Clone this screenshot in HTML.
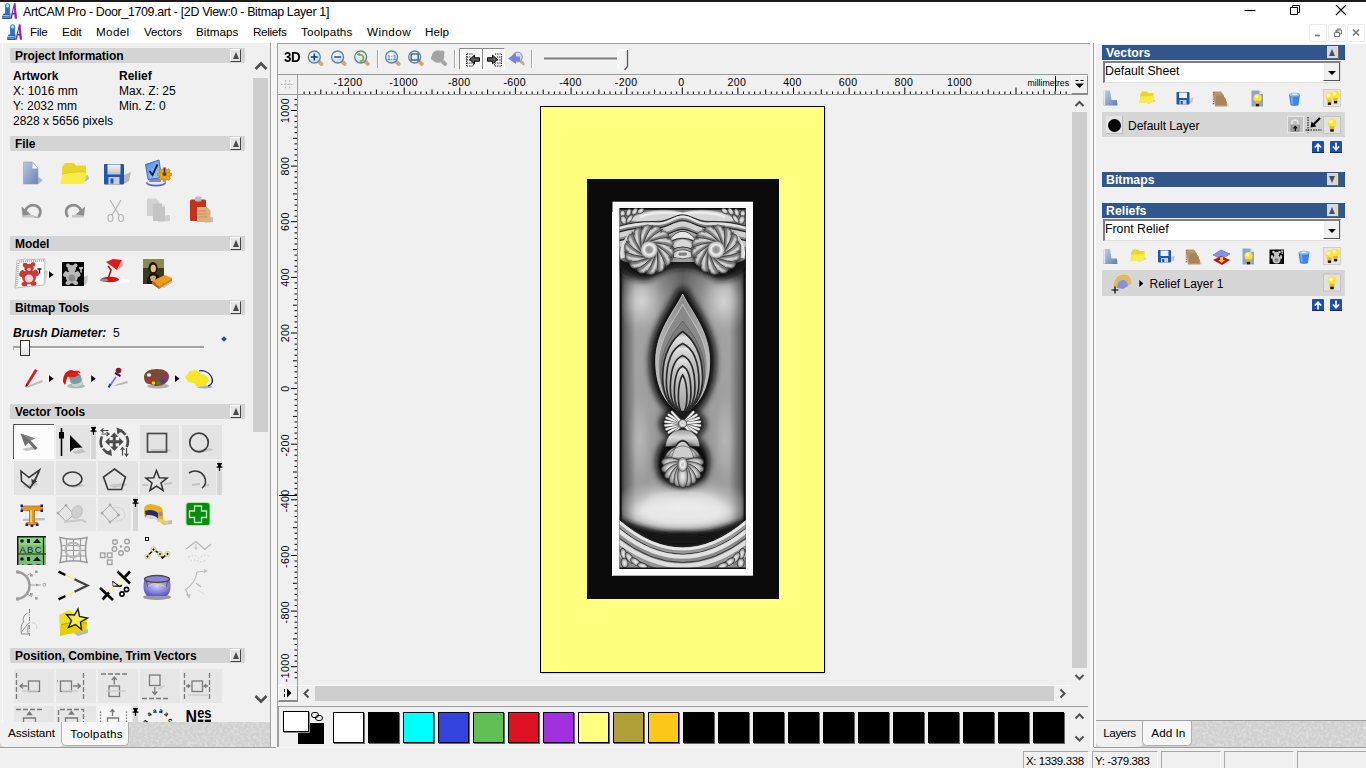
<!DOCTYPE html>
<html>
<head>
<meta charset="utf-8">
<title>ArtCAM Pro - Door_1709.art</title>
<style>
*{box-sizing:border-box;margin:0;padding:0}
html,body{width:1366px;height:768px;overflow:hidden;background:#f0f0f0;font-family:"Liberation Sans",sans-serif;color:#000}
.abs{position:absolute}
#app{position:relative;width:1366px;height:768px;overflow:hidden;background:#f0f0f0}
#topline{left:0;top:0;width:1366px;height:2px;background:#1c1c1c}
#titlebar{left:0;top:2px;width:1366px;height:21px;background:#fff}
#menubar{left:0;top:23px;width:1366px;height:20px;background:#fff}
.ttl{font-size:12.4px;left:23px;top:5px;white-space:nowrap;letter-spacing:-0.33px}
.mi{font-size:11.7px;top:25.3px;white-space:nowrap}
/* left panel */
#left{left:0;top:43px;width:271px;height:705px;background:#f0f0f0;border-right:1px solid #fff}
.hdr{left:10px;width:235px;height:15px;background:#d4d4d4;font-weight:bold;font-size:12px;line-height:17px;padding-left:5px;white-space:nowrap;overflow:hidden;letter-spacing:-0.080px}
.hbtn{position:absolute;right:4px;top:1px;width:11px;height:13px;background:#e4e4e4;border-right:1px solid #444;border-bottom:1px solid #444;border-left:1px solid #fff;border-top:1px solid #fff}
.hbtn:after{content:"";position:absolute;left:1.5px;top:2px;border-left:3.2px solid transparent;border-right:3.2px solid transparent;border-bottom:7px solid #4a4a4a}
.t12{font-size:12px;white-space:nowrap;line-height:14px}
/* right panel */
.rhdr{left:1102px;width:243px;height:15px;background:#31568c;color:#fff;font-weight:bold;font-size:12.300px;line-height:16px;padding-left:4px;overflow:hidden}
.rbtn{position:absolute;right:6px;top:1px;width:12px;height:13px;background:#d4d8e0;border-right:1px solid #666;border-bottom:1px solid #666}
.rbtn.up:after{content:"";position:absolute;left:2px;top:2.5px;border-left:3.5px solid transparent;border-right:3.5px solid transparent;border-bottom:7px solid #505050}
.rbtn.dn:after{content:"";position:absolute;left:2px;top:3px;border-left:3.5px solid transparent;border-right:3.5px solid transparent;border-top:7px solid #505050}
.combo{left:1103px;width:238px;height:21px;background:#fff;border-top:2px solid #808080;border-left:2px solid #808080;border-right:1px solid #e0e0e0;border-bottom:1px solid #e0e0e0;font-size:12.300px;line-height:14px;padding-left:0px;padding-top:1px;white-space:nowrap}
.combo .dd{position:absolute;right:0;top:0;width:17px;height:18px;background:#f0f0f0;border-right:1px solid #555;border-bottom:1px solid #555;border-left:1px solid #fff}
.combo .dd:after{content:"";position:absolute;left:4px;top:8px;border-left:4px solid transparent;border-right:4px solid transparent;border-top:4px solid #000}
.lrow{left:1102px;width:243px;height:25px;background:#d6d6d6;font-size:12.5px}
.sw{position:absolute;top:712px;width:31px;height:31px;border:1px solid #000;box-shadow:1px 1px 0 #666}
</style>
</head>
<body>
<div id="app">
<div id="topline" class="abs"></div>
<div id="titlebar" class="abs"></div>
<div id="menubar" class="abs"></div>
<!-- title -->
<svg class="abs" style="left:2px;top:3px" width="17" height="17" viewBox="0 0 17 17"><path d="M3 11.500V3.200a2.600 2.900 0 0 1 5.200 0v8.300z" fill="#3c82d2"/><ellipse cx="5.500" cy="2.800" rx="1.600" ry="1.700" fill="#a6e0ea"/><rect x="4.600" y="5.500" width="2" height="5" fill="#2558b0" opacity="0.700"/><path d="M1.500 10.500h7v5.300H0.300v-2.500z" fill="#2c64bc"/><path d="M1 12.500h6.500M1.500 14.200h6" stroke="#a8d8f4" stroke-width="0.800"/><path d="M0.300 15.300h8.200" stroke="#1c3c80" stroke-width="0.900"/><path d="M8.300 15.700L12 .3h1.400L15 15.700h-2.100l-.5-4.300h-1.700l-1 4.300z" fill="#86209e"/><path d="M10.900 9.700l1-5 .4 5z" fill="#fff"/><path d="M12.700 .3h.7L15 15.700h-1z" fill="#b040b8" opacity="0.600"/></svg>
<div class="abs ttl" id="ttl">ArtCAM Pro - Door_1709.art - [2D View:0 - Bitmap Layer 1]</div>
<svg class="abs" style="left:1241px;top:3px" width="120" height="16" viewBox="0 0 120 16"><path d="M3.5 7.5h11" stroke="#000" stroke-width="1.2" fill="none"/><path d="M49.5 4.5h7v7h-7z M51.5 4.5v-2h7v7h-2" stroke="#000" stroke-width="1" fill="none"/><path d="M95 2l10 10M105 2l-10 10" stroke="#000" stroke-width="1.1" fill="none"/></svg>
<!-- menu -->
<svg class="abs" style="left:7px;top:24px" width="17" height="17" viewBox="0 0 17 17"><path d="M3 11.500V3.200a2.600 2.900 0 0 1 5.200 0v8.300z" fill="#3c82d2"/><ellipse cx="5.500" cy="2.800" rx="1.600" ry="1.700" fill="#a6e0ea"/><rect x="4.600" y="5.500" width="2" height="5" fill="#2558b0" opacity="0.700"/><path d="M1.500 10.500h7v5.300H0.300v-2.500z" fill="#2c64bc"/><path d="M1 12.500h6.500M1.500 14.200h6" stroke="#a8d8f4" stroke-width="0.800"/><path d="M0.300 15.300h8.200" stroke="#1c3c80" stroke-width="0.900"/><path d="M8.300 15.700L12 .3h1.400L15 15.700h-2.100l-.5-4.300h-1.700l-1 4.300z" fill="#86209e"/><path d="M10.900 9.700l1-5 .4 5z" fill="#fff"/><path d="M12.700 .3h.7L15 15.700h-1z" fill="#b040b8" opacity="0.600"/></svg>
<div class="abs mi" style="left:30px;letter-spacing:-0.34px">File</div>
<div class="abs mi" style="left:62px;letter-spacing:-0.17px">Edit</div>
<div class="abs mi" style="left:96px;letter-spacing:0.33px">Model</div>
<div class="abs mi" style="left:144px;letter-spacing:-0.15px">Vectors</div>
<div class="abs mi" style="left:196px;letter-spacing:0.03px">Bitmaps</div>
<div class="abs mi" style="left:253px;letter-spacing:-0.32px">Reliefs</div>
<div class="abs mi" style="left:301px;letter-spacing:0.16px">Toolpaths</div>
<div class="abs mi" style="left:367px;letter-spacing:0.4px">Window</div>
<div class="abs mi" style="left:425px;letter-spacing:-0.02px">Help</div>
<svg class="abs" style="left:1308px;top:26px;overflow:visible" width="58" height="14" viewBox="0 0 58 14"><rect x="1.500" y="-1.500" width="17" height="17" rx="1.500" fill="none" stroke="#ececec"/><rect x="20.500" y="-1.500" width="17" height="17" rx="1.500" fill="none" stroke="#ececec"/><rect x="39.500" y="-1.500" width="17" height="17" rx="1.500" fill="none" stroke="#ececec"/><path d="M7 9.5h5" stroke="#777" stroke-width="1.6"/><path d="M26.5 6.5h5v4h-5z M28.5 6.5v-2.500h5v4h-2" stroke="#777" stroke-width="1" fill="none"/><path d="M27 5h4M29 3h4" stroke="#777" stroke-width="1"/><path d="M45 3.500l6 6M51 3.500l-6 6" stroke="#777" stroke-width="1.6"/></svg>
<!--TITLE-END-->
<!-- left panel -->
<div id="left" class="abs"></div>
<div class="abs" style="left:2px;top:43px;width:1px;height:680px;background:#fafafa"></div>
<div class="abs hdr" style="top:48px">Project Information<span class="hbtn"></span></div>
<div class="abs t12" style="left:13px;top:69px;font-weight:bold" id="aw">Artwork</div>
<div class="abs t12" style="left:119px;top:69px;font-weight:bold" id="rl">Relief</div>
<div class="abs t12" style="left:13px;top:84px" id="l1">X: 1016 mm</div>
<div class="abs t12" style="left:119px;top:84px" id="l2">Max. Z: 25</div>
<div class="abs t12" style="left:13px;top:99px" id="l3">Y: 2032 mm</div>
<div class="abs t12" style="left:119px;top:99px" id="l4">Min. Z: 0</div>
<div class="abs t12" style="left:13px;top:114px" id="l5">2828 x 5656 pixels</div>
<div class="abs hdr" style="top:136px">File<span class="hbtn"></span></div>
<div class="abs hdr" style="top:236px">Model<span class="hbtn"></span></div>
<div class="abs hdr" style="top:300px">Bitmap Tools<span class="hbtn"></span></div>
<div class="abs t12" style="left:13px;top:326px;font-weight:bold;font-style:italic" id="bd">Brush Diameter:</div>
<div class="abs t12" style="left:113px;top:326px">5</div>
<div class="abs" style="left:13px;top:346px;width:191px;height:2px;background:#a4a4a4"></div>
<div class="abs" style="left:14px;top:348px;width:190px;height:1px;background:#fdfdfd"></div>
<div class="abs" style="left:13px;top:346px;width:1px;height:4px;background:#a8a8a8"></div>
<div class="abs" style="left:20px;top:340px;width:10px;height:16px;background:linear-gradient(#fff,#e2e2e2);border:1px solid #333"></div>
<div class="abs" style="left:222px;top:337px;width:4px;height:4px;background:#33486f;transform:rotate(45deg)"></div>
<div class="abs hdr" style="top:404px">Vector Tools<span class="hbtn"></span></div>
<div class="abs" style="left:13px;top:424px;width:41px;height:35px;background:#fcfcfc;border-left:1px solid #555;border-top:1px solid #555"></div>
<div class="abs" style="left:56px;top:425px;width:34px;height:34px;background:#e3e3e3"></div>
<div class="abs" style="left:91px;top:425px;width:5px;height:34px;background:#d6d6d6"></div>
<div class="abs" style="left:140px;top:425px;width:39px;height:34px;background:#e3e3e3"></div>
<div class="abs" style="left:182px;top:425px;width:40px;height:34px;background:#e3e3e3"></div>
<div class="abs" style="left:14px;top:461px;width:40px;height:34px;background:#e3e3e3"></div>
<div class="abs" style="left:56px;top:461px;width:40px;height:34px;background:#e3e3e3"></div>
<div class="abs" style="left:98px;top:461px;width:40px;height:34px;background:#e3e3e3"></div>
<div class="abs" style="left:140px;top:461px;width:39px;height:34px;background:#e3e3e3"></div>
<div class="abs" style="left:182px;top:461px;width:34px;height:34px;background:#e3e3e3"></div>
<div class="abs" style="left:217px;top:461px;width:5px;height:34px;background:#d6d6d6"></div>
<div class="abs" style="left:56px;top:497px;width:40px;height:34px;background:#e6e6e6"></div>
<div class="abs" style="left:98px;top:497px;width:33px;height:34px;background:#e6e6e6"></div>
<div class="abs" style="left:133px;top:497px;width:5px;height:34px;background:#d6d6d6"></div>
<div class="abs hdr" style="top:648px">Position, Combine, Trim Vectors<span class="hbtn"></span></div>
<div class="abs" style="left:14px;top:669px;width:40px;height:34px;background:#e6e6e6"></div>
<div class="abs" style="left:56px;top:669px;width:40px;height:34px;background:#e6e6e6"></div>
<div class="abs" style="left:98px;top:669px;width:40px;height:34px;background:#e6e6e6"></div>
<div class="abs" style="left:140px;top:669px;width:40px;height:34px;background:#e6e6e6"></div>
<div class="abs" style="left:182px;top:669px;width:40px;height:34px;background:#e6e6e6"></div>
<div class="abs" style="left:14px;top:706px;width:40px;height:16px;background:#e6e6e6"></div>
<div class="abs" style="left:56px;top:706px;width:40px;height:16px;background:#e6e6e6"></div>
<div class="abs" style="left:98px;top:706px;width:33px;height:16px;background:#f6f6f6"></div>
<div class="abs" style="left:133px;top:706px;width:5px;height:16px;background:#d6d6d6"></div>
<div class="abs" style="left:253px;top:78px;width:15px;height:354px;background:#cdcdcd"></div>
<svg class="abs" style="left:252px;top:56px" width="18" height="18" viewBox="0 0 18 18"><path d="M3.500 13l5.500-5.500 5.500 5.500" stroke="#505050" stroke-width="2.700" fill="none"/></svg>
<svg class="abs" style="left:252px;top:690px" width="18" height="18" viewBox="0 0 18 18"><path d="M3.500 6l5.500 5.500 5.500-5.500" stroke="#505050" stroke-width="2.700" fill="none"/></svg>
<svg class="abs" style="left:0;top:0" width="271" height="722" viewBox="0 0 271 722">
<defs>
<linearGradient id="gdoc" x1="0" y1="0" x2="1" y2="1"><stop offset="0" stop-color="#b9c9e2"/><stop offset="1" stop-color="#6783ad"/></linearGradient>
<linearGradient id="gfl" x1="0" y1="0" x2="0" y2="1"><stop offset="0" stop-color="#fafafa"/><stop offset="1" stop-color="#b9bec6"/></linearGradient>
<linearGradient id="gmon" x1="0" y1="0" x2="1" y2="1"><stop offset="0" stop-color="#3f86e6"/><stop offset="1" stop-color="#b9d2f5"/></linearGradient>
<radialGradient id="gbowl" cx="0.5" cy="0.4" r="0.6"><stop offset="0" stop-color="#d5d2ff"/><stop offset="1" stop-color="#5f59c9"/></radialGradient>
<filter id="b1"><feGaussianBlur stdDeviation="0.6"/></filter>
<filter id="b2"><feGaussianBlur stdDeviation="1.1"/></filter>
</defs>
<!-- FILE row 1 -->
<g>
<path d="M37 176l6 4-5 4h-6z" fill="#b4b4b4" filter="url(#b1)"/>
<path d="M23.500 162h9l5.500 6v16h-14.500z" fill="url(#gdoc)"/>
<path d="M32.500 162v6.500h5.500z" fill="#f8fafc"/>
<path d="M23.500 162h9l5.500 6v16h-14.500z" fill="none" stroke="#8aa0c2" stroke-width="0.6"/>
</g>
<g>
<path d="M70 181l18-6 1 4-8 5z" fill="#b8b8b8" filter="url(#b1)"/>
<path d="M62 167l3-4h9l2 2.500h10v6l-1 4H62z" fill="#e8d628"/>
<path d="M60.300 184c1-4 1.500-8 3-11l23.500-1c-.5 5-2 9-3.500 12z" fill="#f8ec46"/>
<path d="M63 174c5-1 14-3 23-2" stroke="#d9c620" stroke-width="0.8" fill="none"/>
</g>
<g>
<path d="M124 175l7-3-2 9-5 3z" fill="#b8b8b8" filter="url(#b1)"/>
<rect x="104" y="164" width="20" height="20.500" rx="1" fill="#1b57b3"/>
<rect x="107.500" y="164.500" width="13" height="10" fill="url(#gfl)"/>
<rect x="108.500" y="177" width="11" height="7.500" fill="#c9ccd2"/>
<rect x="110.500" y="178.500" width="3" height="5" fill="#1b57b3"/>
</g>
<g>
<ellipse cx="156" cy="183" rx="10" ry="3.500" fill="#5a66b8"/>
<ellipse cx="156" cy="182" rx="9" ry="2.800" fill="#e6e9f7"/>
<path d="M150 176h10l1 6h-12z" fill="#8088c9"/>
<path d="M145.500 164.500l13.500-4.500 2.500 17.500-13.500 2z" fill="url(#gmon)" stroke="#2c5cb0" stroke-width="0.800"/>
<path d="M149.500 171l3 4 5-10.500" stroke="#16213f" stroke-width="1.800" fill="none"/>
<g fill="#e8a416" stroke="#a86c08" stroke-width="0.500"><circle cx="164.500" cy="174.500" r="5.200"/><rect x="163" y="167.500" width="3" height="14" rx="0.500"/><rect x="157.500" y="173" width="14" height="3" rx="0.500"/><rect x="163" y="167.500" width="3" height="14" rx="0.500" transform="rotate(45 164.500 174.500)"/><rect x="163" y="167.500" width="3" height="14" rx="0.500" transform="rotate(-45 164.500 174.500)"/></g><circle cx="164.500" cy="174.500" r="4.600" fill="#e8a416"/>
<circle cx="164.500" cy="174" r="2" fill="#5a3a10"/><path d="M164.500 168v4" stroke="#3a3060" stroke-width="1.500"/>
</g>
<!-- FILE row 2 -->
<g>
<path d="M22 215h12v2.500H22z" fill="#c6c6c6" filter="url(#b1)"/>
<path d="M25.500 213.500c-1-6 5-9.500 10-8 5 1.500 6.500 7 3 11.500" stroke="#8d8d8d" stroke-width="2.600" fill="none"/>
<path d="M21.500 206.500l1 9 8.500-1z" fill="#8d8d8d"/>
<path d="M34 217l5 .5" stroke="#aaa" stroke-width="1.500"/>
</g>
<g>
<path d="M72 215h12v2.500H72z" fill="#c6c6c6" filter="url(#b1)"/>
<path d="M81 213.500c1-6-5-9.500-10-8-5 1.500-6.500 7-3 11.500" stroke="#8d8d8d" stroke-width="2.600" fill="none"/>
<path d="M85 206.500l-1 9-8.500-1z" fill="#8d8d8d"/>
</g>
<g stroke="#b4b4b4" stroke-width="1.200" fill="none">
<path d="M110 200l9 15M121 200l-9 15"/>
<ellipse cx="110.500" cy="218" rx="2.500" ry="3.500"/><ellipse cx="121" cy="218" rx="2.500" ry="3.500"/>
</g>
<g>
<path d="M155 216l15-1v6l-12 1z" fill="#d0d0d0" filter="url(#b1)"/>
<path d="M147 198.500h9l3 3v14.500h-12z" fill="#d2d2d2"/>
<path d="M153 203.500h9l3 3v14.500h-12z" fill="#c4c4c4"/>
<path d="M162 203.500v3h3z" fill="#e6e6e6"/>
</g>
<g>
<path d="M205 218l8-1v5l-8 1z" fill="#c0c0c0" filter="url(#b1)"/>
<rect x="190" y="199.500" width="16" height="21.500" rx="1.500" fill="#c2321e"/>
<rect x="195" y="196.500" width="6.500" height="5" rx="1.500" fill="#b9bcc6"/>
<path d="M197 207h10l3.500 3.500V222H197z" fill="#dcb27c"/>
<path d="M199 211h7M199 214h8M199 217h8" stroke="#b98c58" stroke-width="0.800"/>
</g>
<!-- MODEL row -->
<g>
<path d="M17 260l28-1-1 26-29 3z" fill="#fdfdfd" stroke="#b0b0b0" stroke-width="0.800"/>
<path d="M18.500 263l-2 24M19 261.500l25-1" stroke="#9a9a9a" stroke-width="2.200" stroke-dasharray="0.800 1.200"/>
<path d="M45 270l3 1-3 14z" fill="#d0d0d0"/>
<g fill="#c63a3a"><circle cx="25" cy="265" r="2.300"/><circle cx="33" cy="264.500" r="2.300"/><ellipse cx="29" cy="268" rx="4.800" ry="4.200"/><ellipse cx="29" cy="277" rx="7" ry="7.200"/><ellipse cx="22" cy="273.500" rx="2.500" ry="3.500" transform="rotate(30 22 273.500)"/><ellipse cx="36" cy="273" rx="2.500" ry="3.500" transform="rotate(-30 36 273)"/><ellipse cx="24.500" cy="284" rx="3" ry="2.300"/><ellipse cx="33.500" cy="283.500" rx="3" ry="2.300"/></g>
<ellipse cx="29" cy="278.500" rx="4.300" ry="4" fill="#f6d8d8"/>
<ellipse cx="29" cy="269.500" rx="2" ry="1.400" fill="#f0c0c0"/>
<path d="M37.500 269h4M39.500 269v4.500" stroke="#222" stroke-width="1.300"/>
<path d="M49 271.300v6.800l4.600-3.400z" fill="#000"/>
</g>
<g>
<path d="M84 277l4-2-1 8-3 3z" fill="#c4c4c4" filter="url(#b1)"/>
<rect x="62" y="262" width="22" height="24" fill="#050505"/>
<g fill="#b9b9b9"><circle cx="68" cy="265.500" r="2"/><circle cx="75.500" cy="265.500" r="2"/><ellipse cx="71.800" cy="268.500" rx="4.200" ry="3.600"/><ellipse cx="71.800" cy="277" rx="6" ry="6.500"/><ellipse cx="65.500" cy="274" rx="2" ry="3" transform="rotate(30 65.500 274)"/><ellipse cx="78" cy="274" rx="2" ry="3" transform="rotate(-30 78 274)"/><ellipse cx="68" cy="283" rx="2.600" ry="2"/><ellipse cx="75.600" cy="283" rx="2.600" ry="2"/></g>
<ellipse cx="71.800" cy="278" rx="3.500" ry="3.500" fill="#8a8a8a"/>
<path d="M79 268h4M81 268v4.500" stroke="#eee" stroke-width="1.300"/>
</g>
<g>
<ellipse cx="118" cy="281" rx="11" ry="2.500" fill="#fff" filter="url(#b1)"/>
<ellipse cx="110" cy="279.500" rx="9" ry="2.800" fill="#d11414"/>
<ellipse cx="104" cy="280" rx="4" ry="1.500" fill="#8e8e8e" filter="url(#b1)"/>
<path d="M108 279l3-9-3-4" stroke="#c01010" stroke-width="1.600" fill="none"/>
<path d="M106 262l7-3 9 1-5 10z" fill="#e01b1b"/>
<path d="M117 270l5-10 1 6z" fill="#f6a0a0"/>
</g>
<g>
<rect x="143" y="259" width="21" height="25" fill="#3a3a22"/>
<rect x="143" y="259" width="21" height="9" fill="#8a8a52"/>
<path d="M147 284c0-8 2-10 6-11 5 1 8 4 8 11z" fill="#1a140c"/>
<ellipse cx="153" cy="268" rx="4.500" ry="6" fill="#1f140a"/>
<ellipse cx="153.300" cy="268.500" rx="2.700" ry="3.800" fill="#e6bb84"/>
<path d="M150 277c2-2 5-2 6 0l-1 4h-4z" fill="#d8a870"/>
<path d="M152 281l13-6 7 3-13 8z" fill="#f09a1c"/>
<path d="M152 281l7 5v3l-7-5z" fill="#b86608"/>
<path d="M159 286l13-8v3l-13 8z" fill="#d88410"/>
<path d="M162 287l10-6 1 1-9 6z" fill="#c0c0c0" filter="url(#b1)"/>
</g>
<!-- BITMAP row -->
<g>
<path d="M25 387l17-7 1 2-16 6z" fill="#bdbdbd" filter="url(#b1)"/>
<path d="M35 369l2.500 1.500-9.500 15-2.500 1.500.500-3z" fill="#d81c2a"/>
<path d="M25.500 387l.500-3 2 1.500z" fill="#7a1010"/>
<path d="M49 375.300v6.800l4.600-3.400z" fill="#000"/>
</g>
<g>
<ellipse cx="76" cy="386" rx="9" ry="2.500" fill="#b0b8b8" filter="url(#b1)"/>
<path d="M68 375l4 11c3 2 8 1 11-2l-3-11z" fill="#7f9a9a"/>
<path d="M72 386c3 2 8 1 11-2l-1-3c-3 3-8 4-11 2z" fill="#c8d4d4"/>
<ellipse cx="74" cy="374" rx="6.500" ry="3" transform="rotate(-15 74 374)" fill="#e02020"/>
<path d="M63 382c0-6 2-11 8-12 2 0 4 1 5 3-5 0-8 2-9 5s-1 6-2 7z" fill="#d81818"/>
<path d="M78 373c4 1 6 5 4 9" stroke="#ececec" stroke-width="1.200" fill="none"/>
<path d="M91.200 375.300v6.800l4.600-3.400z" fill="#000"/>
</g>
<g>
<path d="M112 386l15-5 1 2-8 2z" fill="#b4b4b4" filter="url(#b1)"/>
<circle cx="118.500" cy="370.500" r="2.800" fill="#8e1436"/>
<path d="M115 373l5.500 3" stroke="#3a2030" stroke-width="2.200"/>
<path d="M117 375.500l-7 10" stroke="#dfe4f4" stroke-width="3.600"/>
<path d="M116 377l-6 8.500" stroke="#7080d8" stroke-width="1.600"/>
<path d="M110.500 384l-2 3.500" stroke="#2038c0" stroke-width="2"/>
</g>
<g>
<ellipse cx="158" cy="386" rx="11" ry="2.500" fill="#b0b0b0" filter="url(#b1)"/>
<path d="M144 377c0-5 5-8 13-8s12 3 12 8-6 9-12 9c-4 0-5-2-8-2s-5-3-5-7z" fill="#7a4a34"/>
<ellipse cx="149" cy="375" rx="2.200" ry="1.700" fill="#f0f0f0"/>
<circle cx="149" cy="381" r="1.800" fill="#e02020"/><circle cx="153.500" cy="383" r="1.800" fill="#f0d010"/><circle cx="158.500" cy="383" r="1.800" fill="#20a030"/><circle cx="163" cy="381" r="1.800" fill="#2040e0"/><circle cx="165.500" cy="377" r="1.700" fill="#8030c0"/>
<path d="M175 375.300v6.800l4.600-3.400z" fill="#000"/>
</g>
<g>
<ellipse cx="205" cy="387" rx="8" ry="1.500" fill="#a8b0d8" filter="url(#b1)"/>
<path d="M199 371c3-1 9 0 12 5s1 9-3 10" stroke="#1a237e" stroke-width="1.300" fill="none"/>
<path d="M185 377l5-6 6-1 5 4 6 2 2 5-4 5-8 1-3-4-6-1z" fill="#f6e626"/>
</g>
<!-- VECTOR row1 -->
<g>
<path d="M22 449l12-3 4 3-12 2z" fill="#c4c4c4" filter="url(#b1)"/>
<path d="M20.500 433.500l14.500 5-4.500 2 7 7.500-2.500 2-6.500-7.500-3.500 3.500z" fill="#6e6e6e"/>
<path d="M20.500 433.500l14.500 5-4.500 2z" fill="#858585"/>
</g>
<g>
<path d="M72 452l10-3 4 3-10 2z" fill="#c0c0c0" filter="url(#b1)"/>
<path d="M61.500 428v28" stroke="#000" stroke-width="1.600"/>
<rect x="59" y="432" width="5" height="6.500" fill="#000"/>
<path d="M70 435v17l4.200-4 8.300-.5z" fill="#000"/>
</g>
<path d="M91 427h5v1.500h-1v2h1.500v1.200h-2.400v3.300h-1.200v-3.300h-2.400v-1.200h1.500v-2h-1z" fill="#000"/>
<g fill="#4c4c4c" stroke="none">
<path d="M102 447.500a12.500 12.500 0 0 1 0-11" fill="none" stroke="#4c4c4c" stroke-width="2.600"/>
<path d="M126.600 436a12.500 12.500 0 0 1 0 11" fill="none" stroke="#4c4c4c" stroke-width="2.600"/>
<path d="M119.500 430.300a12.500 12.500 0 0 1 6 4.500" fill="none" stroke="#4c4c4c" stroke-width="2.600"/>
<path d="M109 453.200a12.500 12.500 0 0 1-6-4.500" fill="none" stroke="#4c4c4c" stroke-width="2.600"/>
<path d="M116.500 427.500l6.500 2.500-5.500 4.500z"/><path d="M112 456l-6.500-2.500 5.500-4.500z"/>
<path d="M114.300 432.500l4.200 4.500h-2.700v3.300h3.300v-2.700l4.500 4.200-4.500 4.200v-2.700h-3.300v3.300h2.700l-4.200 4.500-4.200-4.500h2.700v-3.300h-3.300v2.700l-4.500-4.200 4.500-4.200v2.700h3.300v-3.300h-2.700z"/>
<path d="M101.500 430.500h7M103.500 428.500l-2.500 2 2.500 2M108.500 434h-7M106.500 432l2.500 2-2.500 2" stroke="#4c4c4c" stroke-width="1.200" fill="none"/>
<path d="M122.500 448v7.500M120.600 450l1.900-2.500 1.900 2.500M126.500 455.500v-7.500M124.600 453.500l1.900 2.500 1.900-2.500" stroke="#4c4c4c" stroke-width="1.200" fill="none"/>
</g>
<g>
<path d="M150 449h18l4 2-18 2z" fill="#c6c6c6" filter="url(#b1)"/>
<rect x="147.500" y="433.500" width="19" height="18.500" fill="none" stroke="#4a4a4a" stroke-width="1.700"/>
</g>
<g>
<path d="M196 450l14-2 4 2-14 3z" fill="#c6c6c6" filter="url(#b1)"/>
<circle cx="199" cy="442.500" r="9.300" fill="none" stroke="#3c3c3c" stroke-width="1.700"/>
</g>
<!-- VECTOR row2 -->
<g>
<path d="M22 486l14-4 2 3-10 3z" fill="#c4c4c4" filter="url(#b1)"/>
<path d="M21 471l8 6.500 10.500-7.500-4.500 10.500-5 7.500-8.500-7z" fill="none" stroke="#383838" stroke-width="1.600"/>
<path d="M39 472l-6.500 11.500M32 480l.500 4 3.500-2.500z" stroke="#383838" stroke-width="1.200" fill="#383838"/>
</g>
<g>
<path d="M70 486l12-2 3 2-12 2z" fill="#c6c6c6" filter="url(#b1)"/>
<ellipse cx="72.500" cy="479" rx="9.500" ry="7" fill="none" stroke="#383838" stroke-width="1.600"/>
</g>
<g>
<path d="M108 485l16-2 4 2-14 3z" fill="#c6c6c6" filter="url(#b1)"/>
<path d="M114.500 469l11 8-4 12.500h-13.500l-4.500-12.500z" fill="none" stroke="#383838" stroke-width="1.600"/>
</g>
<g>
<path d="M142 485h6M164 484l8-1" stroke="#c6c6c6" stroke-width="2" filter="url(#b1)"/>
<path d="M156.500 470.500l2.800 7.300 7.700.3-6 4.900 2.100 7.500-6.600-4.300-6.600 4.300 2.100-7.500-6-4.900 7.700-.3z" fill="none" stroke="#303030" stroke-width="1.500"/>
</g>
<g>
<path d="M192 485l8-1M203 486l6-1" stroke="#c2c2c2" stroke-width="2.200" filter="url(#b1)"/>
<path d="M189 473c5-3.500 12-2 15 3s1.500 10-2 12" fill="none" stroke="#383838" stroke-width="1.600"/>
</g>
<path d="M217 463h5v1.500h-1v2h1.500v1.200h-2.400v3.300h-1.200v-3.300h-2.400v-1.200h1.500v-2h-1z" fill="#000"/>
<!-- VECTOR row3 -->
<g>
<path d="M23 520l22-1" stroke="#c0c0c0" stroke-width="2.400" filter="url(#b1)"/>
<path d="M21.500 506h21v4.500h-8v12h3v2.500h-11v-2.500h3v-12h-8z" fill="#e8961a" stroke="#9a5a08" stroke-width="0.600"/>
<path d="M30 510.500h2v12h-2z" fill="#f8c860"/>
<g fill="#1a1a8e"><rect x="20.500" y="504.500" width="2.500" height="2.500"/><rect x="40.500" y="504.500" width="2.500" height="2.500"/><rect x="20.500" y="509.500" width="2.500" height="2.500"/><rect x="40.500" y="509.500" width="2.500" height="2.500"/><rect x="25.500" y="523.500" width="2.500" height="2.500"/><rect x="36" y="523.500" width="2.500" height="2.500"/><rect x="30.700" y="524.500" width="2.500" height="2.500"/></g>
</g>
<g stroke="#a8a8a8" fill="none" stroke-width="1">
<path d="M58 513l8-7.500 8 9-8 7z"/><circle cx="58" cy="513" r="1" fill="#a8a8a8"/><circle cx="66" cy="505.500" r="1" fill="#a8a8a8"/>
<ellipse cx="77" cy="512" rx="5" ry="6.500" transform="rotate(25 77 512)" fill="#cfcfcf" stroke="#bdbdbd"/>
<path d="M64 522l18-2 4 2" stroke="#c8c8c8" stroke-width="2"/>
</g>
<g stroke="#a8a8a8" fill="none" stroke-width="1">
<path d="M102 513l8-8 9 10-9 7z"/><circle cx="102" cy="513" r="1" fill="#a8a8a8"/><circle cx="110" cy="505" r="1" fill="#a8a8a8"/><circle cx="118.500" cy="515" r="1" fill="#a8a8a8"/><circle cx="110" cy="522" r="1" fill="#a8a8a8"/>
<path d="M113 508c6-2 12 1 12 7 0 4-6 7-13 6" stroke="#d2d2d2"/>
</g>
<path d="M133 499h5v1.500h-1v2h1.500v1.200h-2.400v3.300h-1.200v-3.300h-2.400v-1.200h1.500v-2h-1z" fill="#000"/>
<g>
<path d="M160 522l12-2v4l-8 1z" fill="#bcbcbc" filter="url(#b1)"/>
<path d="M144 510c0-4 3-6 7-6l8 2c3 1 4 4 4 8v6l-17-2c-2-1-2-4-2-8z" fill="#eab020"/>
<path d="M145 511c4-2 10-1 13 2v6l-12-1.500z" fill="#2a2a6e"/>
<path d="M146 515.500c4-1 8 0 11 2v2l-11-1.500z" fill="#d8d8e8"/>
<path d="M157 518l12 3.500-1 2.500-11-2.500z" fill="#f0d060"/>
<circle cx="160.500" cy="514" r="2.300" fill="#8890a8"/>
</g>
<g>
<rect x="185.500" y="502" width="25" height="24" rx="3" fill="#a8e8a0"/>
<rect x="186.500" y="503" width="23" height="22" rx="2.500" fill="#0a8a14"/>
<path d="M194.500 506h7v5h5v6.500h-5v5h-7v-5h-5v-6.500h5z" fill="none" stroke="#b8f8b0" stroke-width="1.300"/>
</g>
<!-- VECTOR row4 -->
<clipPath id="abcclip"><rect x="17" y="536" width="29" height="29"/></clipPath>
<g clip-path="url(#abcclip)">
<rect x="17" y="536" width="29" height="29" fill="#8fd08a"/>
<rect x="17" y="536" width="29" height="1.500" fill="#0a200a"/><rect x="17" y="536" width="1.500" height="29" fill="#0a200a"/>
<path d="M17 554h29M43.500 536v29" stroke="#0a300a" stroke-width="1.200"/>
<circle cx="22" cy="541" r="1.800" fill="#0a200a"/><rect x="27" y="539" width="3" height="4" fill="#0a200a"/><path d="M33 543l4-4.500 4 4.500z" fill="#0a200a"/>
<circle cx="22" cy="559" r="1.800" fill="#0a200a"/><rect x="27" y="557" width="3" height="4" fill="#0a200a"/><path d="M33 561l4-4.500 4 4.500z" fill="#0a200a"/>
<text x="19.500" y="552.500" font-family="Liberation Sans, sans-serif" font-size="9.500" fill="#0a300a" textLength="22">ABC</text>
<text x="19.500" y="570" font-family="Liberation Sans, sans-serif" font-size="9.500" fill="#0a300a" textLength="22">ABC</text>
<rect x="17" y="545" width="29" height="20" fill="#103010" opacity="0.120"/>
</g>
<g stroke="#9a9a9a" fill="none" stroke-width="1.100">
<path d="M60 537.500c8 2 19 2 27 0-2 8-2 17 0 25-8-2-19-2-27 0 2-8 2-17 0-25z" stroke-width="1.500"/>
<path d="M66.500 539v23M73.500 539.500v22M80.500 539v23M61 545.500h25M61.500 550.500h24M61 556h25"/>
<circle cx="73" cy="550" r="7.500" stroke="#b8b8b8" stroke-width="2"/>
</g>
<g stroke="#a2a2a2" fill="none" stroke-width="1.400">
<circle cx="115" cy="542" r="2.300"/><circle cx="127" cy="541.500" r="2.300"/><circle cx="114.500" cy="549" r="2.300"/><circle cx="127" cy="549" r="2.300"/><circle cx="121" cy="553" r="2.300"/>
<rect x="100.500" y="553" width="4.500" height="4.500"/><rect x="107.500" y="553" width="4.500" height="4.500"/><rect x="107.500" y="560" width="4.500" height="4.500"/>
<circle cx="121" cy="546.500" r="0.600"/>
</g>
<g>
<rect x="145.500" y="537.500" width="3" height="3" fill="#fff" stroke="#000" stroke-width="0.900"/>
<path d="M147.500 556.500l6-7 6.500 4.500 2.500 4 5-4.500" stroke="#101010" stroke-width="1.600" fill="none"/>
<g fill="#f4f4b0" stroke="#a0a060" stroke-width="0.500"><circle cx="147.500" cy="556.500" r="2.600"/><circle cx="153.500" cy="549.500" r="2.600"/><circle cx="160" cy="554" r="2.600"/><circle cx="167.500" cy="554" r="2.600"/></g>
<g stroke="#000" stroke-width="0.800"><path d="M146.300 556.500h2.400M147.500 555.300v2.400M152.300 549.500h2.400M153.500 548.300v2.400M158.800 554h2.400M160 552.800v2.400M166.300 554h2.400M167.500 552.800v2.400"/></g>
</g>
<g stroke="#b2b2b2" fill="none" stroke-width="1.100">
<path d="M186 549l10-7.500 9 8 6-5.500"/>
<path d="M196 544v5M194.500 547.500l1.500 2 1.500-2" stroke-width="0.800"/>
<path d="M188 557l6-2 5 3 5-3 6 1M190 561l5-1 6 2 6-2" stroke="#d6d6d6" stroke-dasharray="2 1.500"/>
</g>
<!-- VECTOR row5 -->
<g stroke="#9c9c9c" fill="none">
<path d="M17.500 572c8 1 12 7 12 13.500s-4 12.500-12 13.500" stroke-width="2.400"/>
<path d="M26 576l5-3M27 594l5 3M29 585h12" stroke-width="0.900"/>
<g fill="#9c9c9c" stroke="none"><rect x="16" y="570.500" width="3" height="3"/><rect x="16" y="597.500" width="3" height="3"/><rect x="30" y="574" width="2.600" height="2.600"/><rect x="35" y="570.500" width="2.600" height="2.600"/><rect x="30" y="593" width="2.600" height="2.600"/><rect x="35" y="597" width="2.600" height="2.600"/><path d="M36 583.500l3 1.500-3 1.500z"/></g>
<rect x="43" y="583.500" width="2.500" height="2.500" stroke-width="0.700" fill="#fff"/>
</g>
<g>
<path d="M65 574.800l10 4.700M65 596.200l10-4.700" stroke="#f6f6c0" stroke-width="3.600"/>
<path d="M58.500 571.700l7 3.300M58.500 599.300l7-3.300" stroke="#000" stroke-width="2.400"/>
<path d="M65.500 575l9 4.300M65.500 596l9-4.300" stroke="#c8c880" stroke-width="0.800" stroke-dasharray="1 1.200"/>
<path d="M74.500 579.300l13 6.200-13 6.200" stroke="#404040" stroke-width="2.200" fill="none"/>
</g>
<g>
<path d="M107 594l16-16" stroke="#f4f4c0" stroke-width="3.500"/>
<path d="M100 588l13 12M102.500 599.500l6.500-7" stroke="#000" stroke-width="2.600"/>
<path d="M117.500 571.500l12.500 12M130 571.500l-6.500 7" stroke="#000" stroke-width="2.600"/>
<path d="M112.500 581.500l7 5 2.500-1.500M113 586l8.500.500" stroke="#000" stroke-width="1.100" fill="none"/>
<path d="M112.500 581.500l5.500 4-5 .5z" fill="#fff" stroke="#000" stroke-width="0.600"/>
<circle cx="122" cy="594" r="2.100" fill="#fff" stroke="#000" stroke-width="1.600"/><circle cx="126.500" cy="589.500" r="2.100" fill="#fff" stroke="#000" stroke-width="1.600"/>
</g>
<g>
<ellipse cx="157" cy="597" rx="14" ry="3" fill="#9a9a9a" filter="url(#b1)"/>
<path d="M144.500 579c-2 8-1 14 3 17h19c4-3 5-9 3-17z" fill="url(#gbowl)"/>
<ellipse cx="157" cy="579" rx="12.500" ry="3.500" fill="#8a86d8" stroke="#4a4a4a" stroke-width="1.300"/>
<path d="M147 588c4-4 7-5 10-4s7 1 10 4" stroke="#e0e060" stroke-width="1" fill="none"/>
<path d="M146 580l2 8M168 580l-2 8" stroke="#555" stroke-width="0.800"/>
</g>
<g stroke="#bcbcbc" fill="none" stroke-width="1.200">
<path d="M197 572c-1 8-6 14-12 18"/><path d="M197 572l9-1M204 569.500l2.500 1.500-2.500 1.500"/><path d="M196 583l5 4"/><path d="M186 590l3 7M186.500 594l2.500 3.500 1-3.500" /><path d="M198 590l6 4" stroke="#dcdcdc"/>
</g>
<!-- VECTOR row6 -->
<g stroke="#8c8c8c" fill="none" stroke-width="1">
<path d="M29.500 609v27" stroke-dasharray="4 1.500 1 1.500"/>
<path d="M27.500 613c-4 2-5 6-4 9-2 2-3 5-2 12h7c-2-3 0-7 0-9"/>
<path d="M21.500 632l7-9" />
<path d="M31.500 623c4-1 6 2 5 6" stroke="#d0d0d0"/>
</g>
<g>
<path d="M72 632l16-3v4l-10 3z" fill="#b8b8b8" filter="url(#b1)"/>
<path d="M59 615l10-5 5 3 13 6-1 10-26 3z" fill="#f0e020"/>
<path d="M60 632l1-7c8-3 18-3 26-2l-1 8c-8 1-18 3-26 5z" fill="#e8d000"/>
<path d="M61 625c8-3 18-3 26-2" stroke="#a89800" stroke-width="0.800" fill="none"/>
<path d="M78 609l1.500 7.500 8 1.500-7 4 1 7.500-6-5-7 3 3-7-5-6 8 .5z" fill="#f4ec50" stroke="#202020" stroke-width="1.400"/>
</g>
<!-- POSITION row1 -->
<g stroke="#7a7a7a" fill="none" stroke-width="1.300">
<path d="M16.500 673v26" stroke-dasharray="5 2"/><rect x="28.500" y="681" width="11" height="10.500"/><path d="M27.500 686h-7M23 683.500l-3 2.500 3 2.500" />
<path d="M58 681h-1" />
<path d="M83.500 673v26" stroke-dasharray="5 2"/><rect x="60.500" y="681" width="11" height="10.500"/><path d="M73 686h7M77.500 683.500l3 2.500-3 2.500"/>
<path d="M101 674h26" stroke-dasharray="5 2"/><rect x="109" y="686" width="10.500" height="10.500"/><path d="M114.300 684.500v-7M111.800 680l2.500-3 2.500 3"/>
<path d="M142 698.500h26" stroke-dasharray="5 2"/><rect x="149.500" y="675" width="10.500" height="10.500"/><path d="M154.800 687v7M152.300 691.500l2.500 3 2.500-3"/>
<path d="M184.500 673v26M209.500 673v26" stroke-dasharray="5 2"/><rect x="192" y="681" width="10.500" height="10.500"/><path d="M186 686h4M204 686h4" /><path d="M188 684l2.500 2-2.500 2zM206 684l-2.500 2 2.500 2z" fill="#7a7a7a" stroke-width="0.600"/>
</g>
<g stroke="#cdcdcd" stroke-width="1.600" filter="url(#b1)"><path d="M22 691h16M62 691h16M106 691h20M158 689l6-3M188 695h20"/></g>
<!-- POSITION row2 -->
<g stroke="#7a7a7a" fill="none" stroke-width="1.300">
<path d="M16 709.500h26" stroke-dasharray="5 2"/><path d="M29.500 712l-2 2.500h4z" fill="#7a7a7a"/><path d="M23.500 726v-8h12v8"/>
<path d="M58.500 722v-12.500h25v12.500" stroke-dasharray="5 2"/><path d="M71.500 711.500l-2 2.500h4z" fill="#7a7a7a"/><path d="M65.500 726v-8h12v8"/>
<path d="M100.500 722v-12" stroke-dasharray="1.500 1.500"/><path d="M126.500 722v-12" stroke-dasharray="1.500 1.500"/><path d="M112.500 710v6M110.500 712l2-2.500 2 2.500"/><path d="M107.500 726v-8h11v8"/>
</g>
<path d="M133 708h5v1.500h-1v2h1.500v1.200h-2.400v3.300h-1.200v-3.300h-2.400v-1.200h1.500v-2h-1z" fill="#000"/>
<g font-family="Liberation Sans, sans-serif" fill="#000">
<text x="185.500" y="723.800" font-size="19.500" font-weight="bold" textLength="11.500" lengthAdjust="spacingAndGlyphs">N</text><text x="197.200" y="718.400" font-size="14.500" font-weight="bold" textLength="14.300" lengthAdjust="spacingAndGlyphs">es</text><rect x="197.800" y="719.600" width="5.500" height="3"/><rect x="204.800" y="719.600" width="6.200" height="3"/>
<text x="144" y="723" font-size="6.500" font-weight="bold" transform="rotate(-55 146 722)">a</text><text x="148" y="716" font-size="6.500" font-weight="bold" transform="rotate(-30 150 715)">a</text><text x="153" y="713" font-size="6.500" font-weight="bold" transform="rotate(-10 155 712)">a</text><text x="159" y="713" font-size="6.500" font-weight="bold" transform="rotate(15 161 712)">a</text><text x="164" y="716" font-size="6.500" font-weight="bold" transform="rotate(40 166 715)">a</text><text x="168" y="721" font-size="6.500" font-weight="bold" transform="rotate(60 169 720)">c</text>
</g>

</svg>

<div class="abs" style="left:0;top:722px;width:271px;height:26px;background:#d0d0d0" id="ltabbg"></div>
<svg class="abs" style="left:128px;top:722px" width="143" height="25"><filter id="nz" x="0" y="0" width="100%" height="100%"><feTurbulence type="fractalNoise" baseFrequency="0.350" numOctaves="2" seed="3"/><feColorMatrix values="0 0 0 0 1  0 0 0 0 1  0 0 0 0 1  1.200 0 0 0 -0.480"/></filter><rect width="143" height="25" filter="url(#nz)" opacity="0.700"/></svg>
<div class="abs" style="left:0;top:722px;width:64px;height:25px;background:#f0f0f0;border-radius:0 0 5px 5px"></div>
<div class="abs" style="left:61px;top:722px;width:68px;height:24px;background:#f7f7f7;border:1px solid #b0b0b0;border-top:none;border-radius:0 0 5px 5px"></div>
<div class="abs" style="left:8px;top:725.5px;font-size:11.8px;letter-spacing:-0.1px" id="tb1">Assistant</div>
<div class="abs" style="left:70.3px;top:726.5px;font-size:11.8px;letter-spacing:0.23px" id="tb2">Toolpaths</div>
<div class="abs" style="left:0;top:747px;width:276px;height:1px;background:#a0a0a0;z-index:3"></div>
<div class="abs" style="left:270px;top:43px;width:1px;height:705px;background:#a0a0a0"></div>
<!--LEFT-END-->
<!--CENTER-->
<!-- center -->
<div class="abs" style="left:277px;top:43px;width:813px;height:1px;background:#a0a0a0"></div>
<div class="abs" style="left:1090px;top:43px;width:3px;height:704px;background:#f8f8f8"></div>
<div class="abs" style="left:277px;top:43px;width:1px;height:704px;background:#a0a0a0"></div>
<div class="abs" style="left:1093px;top:43px;width:1px;height:704px;background:#a0a0a0"></div>
<div class="abs" style="left:1094px;top:43px;width:2px;height:705px;background:#fbfbfb"></div>
<div class="abs" style="left:271px;top:43px;width:6px;height:705px;background:#f6f6f6"></div>
<div class="abs" style="left:278px;top:747px;width:815px;height:1px;background:#f8f8f8"></div>
<div class="abs" id="t3d" style="left:284px;top:48px;font-size:15.500px;font-weight:bold;letter-spacing:-0.500px;line-height:18px;transform:scaleX(0.860);transform-origin:0 0">3D</div>
<!--TOOLBARICONS-->
<svg class="abs" style="left:277px;top:44px" width="400" height="30" viewBox="277 44 400 30">
<defs><radialGradient id="zg" cx="0.4" cy="0.35" r="0.7"><stop offset="0" stop-color="#f4fbff"/><stop offset="1" stop-color="#b8d8ea"/></radialGradient></defs>
<path d="M319.3 62l2.200 2" stroke="#d0a878" stroke-width="3.800" stroke-linecap="round"/><circle cx="314.3" cy="57" r="6" fill="url(#zg)" stroke="#6284a2" stroke-width="1.300"/><path d="M310.800 57h7M314.300 53.500v7" stroke="#1c3a5c" stroke-width="1.500"/>
<path d="M342.6 62l2.200 2" stroke="#d0a878" stroke-width="3.800" stroke-linecap="round"/><circle cx="337.6" cy="57" r="6" fill="url(#zg)" stroke="#6284a2" stroke-width="1.300"/><path d="M334 57h7.200" stroke="#3c5a7c" stroke-width="1.600"/>
<path d="M365.7 62l2.200 2" stroke="#d0a878" stroke-width="3.800" stroke-linecap="round"/><circle cx="360.7" cy="57" r="6" fill="url(#zg)" stroke="#6284a2" stroke-width="1.300"/><path d="M363.500 58.500c0 2-2 3-3.500 2.500M363.500 58.500c0-3-2.500-4.500-5-3.500" stroke="#8aa820" stroke-width="1.600" fill="none"/><path d="M356.500 54l3.500-1.500-.5 4z" fill="#8aa820"/>
<path d="M377.500 50v18" stroke="#a8a8a8" stroke-width="1"/><path d="M378.500 50v18" stroke="#fff" stroke-width="1"/>
<path d="M396.6 62l2.200 2" stroke="#d0a878" stroke-width="3.800" stroke-linecap="round"/><circle cx="391.6" cy="57" r="6" fill="url(#zg)" stroke="#6284a2" stroke-width="1.300"/><text x="391.600" y="59.500" font-family="Liberation Sans, sans-serif" font-size="6.500" font-weight="bold" fill="#6a88a4" text-anchor="middle">1:1</text>
<path d="M419.7 62l2.200 2" stroke="#d0a878" stroke-width="3.800" stroke-linecap="round"/><circle cx="414.7" cy="57" r="6" fill="url(#zg)" stroke="#6284a2" stroke-width="1.300"/><rect x="411.200" y="54" width="7" height="6" fill="none" stroke="#3c5a7c" stroke-width="1.300"/>
<path d="M443 62l2.200 2" stroke="#a4a4a4" stroke-width="3.800" stroke-linecap="round"/><circle cx="438" cy="56.500" r="6.300" fill="#a4a4a4"/><circle cx="433.500" cy="58" r="2.500" fill="#a4a4a4"/><circle cx="442" cy="53" r="2.500" fill="#a4a4a4"/>
<path d="M454.500 50v18" stroke="#a8a8a8" stroke-width="1"/><path d="M455.500 50v18" stroke="#fff" stroke-width="1"/>
<rect x="459.500" y="48.500" width="22.500" height="21" fill="#f8f8f8"/><path d="M459.500 69.500v-21h22.500" stroke="#8a8a8a" stroke-width="1" fill="none"/>
<rect x="482.500" y="48.500" width="22" height="21" fill="#f8f8f8"/><path d="M482.500 69.500v-21h22" stroke="#8a8a8a" stroke-width="1" fill="none"/><path d="M459.500 69.500h45v-21" stroke="#fff" stroke-width="1" fill="none"/>
<path d="M467 54h6M467 57h4M467 60h4M467 63h6M467 66h6M466.500 54v12M473.500 62v4" stroke="#000" stroke-width="1" stroke-dasharray="1.200 1"/>
<path d="M469.500 59.500l5-4.300v2.600h5v3.400h-5v2.600z" fill="#5a5a5a" stroke="#000" stroke-width="1"/>
<path d="M495 54h6M497 57h4M497 60h4M495 63h6M495 66h6M501.500 54v12M494.500 62v4" stroke="#000" stroke-width="1" stroke-dasharray="1.200 1"/>
<path d="M497.500 59.500l-5-4.300v2.600h-5v3.400h5v2.600z" fill="#5a5a5a" stroke="#000" stroke-width="1"/>
<path d="M520.500 61l3 3" stroke="#d0a878" stroke-width="2.600" stroke-linecap="round"/><circle cx="517.500" cy="57" r="4.800" fill="#cfe0f4" stroke="#8aa0c8" stroke-width="1.200"/><path d="M508 58.500l8-5.500v3.500h4v4.500h-4v3z" fill="#6a7cd4" opacity="0.900"/>
<path d="M531.500 50v18" stroke="#a8a8a8" stroke-width="1"/><path d="M532.500 50v18" stroke="#fff" stroke-width="1"/>
<path d="M544 58.800h73" stroke="#7c7c7c" stroke-width="2.400"/><path d="M544 60h73" stroke="#fafafa" stroke-width="1"/>
<path d="M618 50h9.500v16.500l-2.500 3h-7z" fill="#f2f2f2"/><path d="M627.500 50v16.500l-3 3.500" stroke="#555" stroke-width="1.300" fill="none"/><path d="M618 69.500v-19.500h9" stroke="#fff" stroke-width="1" fill="none"/>
</svg>
<!--TOOLBARICONS-END-->
<div class="abs" style="left:278px;top:74px;width:810px;height:1px;background:#9a9a9a"></div>
<div class="abs" style="left:278px;top:94px;width:793px;height:1px;background:#9a9a9a"></div>
<div class="abs" style="left:297px;top:74px;width:1px;height:611px;background:#9a9a9a"></div>
<svg class="abs" style="left:0;top:0" width="1100" height="750" viewBox="0 0 1100 750">
<path d="M304.1 91.5v2.5M309.6 91.5v2.5M315.2 91.5v2.5M320.8 89.5v4.5M326.3 91.5v2.5M331.9 91.5v2.5M337.5 91.5v2.5M343.0 91.5v2.5M348.6 87.5v6.5M354.1 91.5v2.5M359.7 91.5v2.5M365.3 91.5v2.5M370.8 91.5v2.5M376.4 89.5v4.5M382.0 91.5v2.5M387.5 91.5v2.5M393.1 91.5v2.5M398.6 91.5v2.5M404.2 87.5v6.5M409.8 91.5v2.5M415.3 91.5v2.5M420.9 91.5v2.5M426.4 91.5v2.5M432.0 89.5v4.5M437.6 91.5v2.5M443.1 91.5v2.5M448.7 91.5v2.5M454.3 91.5v2.5M459.8 87.5v6.5M465.4 91.5v2.5M470.9 91.5v2.5M476.5 91.5v2.5M482.1 91.5v2.5M487.6 89.5v4.5M493.2 91.5v2.5M498.8 91.5v2.5M504.3 91.5v2.5M509.9 91.5v2.5M515.4 87.5v6.5M521.0 91.5v2.5M526.6 91.5v2.5M532.1 91.5v2.5M537.7 91.5v2.5M543.2 89.5v4.5M548.8 91.5v2.5M554.4 91.5v2.5M559.9 91.5v2.5M565.5 91.5v2.5M571.1 87.5v6.5M576.6 91.5v2.5M582.2 91.5v2.5M587.7 91.5v2.5M593.3 91.5v2.5M598.9 89.5v4.5M604.4 91.5v2.5M610.0 91.5v2.5M615.6 91.5v2.5M621.1 91.5v2.5M626.7 87.5v6.5M632.2 91.5v2.5M637.8 91.5v2.5M643.4 91.5v2.5M648.9 91.5v2.5M654.5 89.5v4.5M660.1 91.5v2.5M665.6 91.5v2.5M671.2 91.5v2.5M676.7 91.5v2.5M682.3 87.5v6.5M687.9 91.5v2.5M693.4 91.5v2.5M699.0 91.5v2.5M704.5 91.5v2.5M710.1 89.5v4.5M715.7 91.5v2.5M721.2 91.5v2.5M726.8 91.5v2.5M732.4 91.5v2.5M737.9 87.5v6.5M743.5 91.5v2.5M749.0 91.5v2.5M754.6 91.5v2.5M760.2 91.5v2.5M765.7 89.5v4.5M771.3 91.5v2.5M776.9 91.5v2.5M782.4 91.5v2.5M788.0 91.5v2.5M793.5 87.5v6.5M799.1 91.5v2.5M804.7 91.5v2.5M810.2 91.5v2.5M815.8 91.5v2.5M821.3 89.5v4.5M826.9 91.5v2.5M832.5 91.5v2.5M838.0 91.5v2.5M843.6 91.5v2.5M849.2 87.5v6.5M854.7 91.5v2.5M860.3 91.5v2.5M865.8 91.5v2.5M871.4 91.5v2.5M877.0 89.5v4.5M882.5 91.5v2.5M888.1 91.5v2.5M893.7 91.5v2.5M899.2 91.5v2.5M904.8 87.5v6.5M910.3 91.5v2.5M915.9 91.5v2.5M921.5 91.5v2.5M927.0 91.5v2.5M932.6 89.5v4.5M938.2 91.5v2.5M943.7 91.5v2.5M949.3 91.5v2.5M954.8 91.5v2.5M960.4 87.5v6.5M966.0 91.5v2.5M971.5 91.5v2.5M977.1 91.5v2.5M982.6 91.5v2.5M988.2 89.5v4.5M993.8 91.5v2.5M999.3 91.5v2.5M1004.9 91.5v2.5M1010.5 91.5v2.5M1016.0 87.5v6.5M1021.6 91.5v2.5M1027.1 91.5v2.5M1032.7 91.5v2.5M1038.3 91.5v2.5M1043.8 89.5v4.5M1049.4 91.5v2.5M1055.0 91.5v2.5M1060.5 91.5v2.5M1066.1 91.5v2.5" stroke="#000" stroke-width="1" fill="none"/>
<path d="M294.5 677.8h2.5M294.5 672.3h2.5M291.0 666.7h6.0M294.5 661.1h2.5M294.5 655.6h2.5M294.5 650.0h2.5M294.5 644.5h2.5M293.0 638.9h4.0M294.5 633.3h2.5M294.5 627.8h2.5M294.5 622.2h2.5M294.5 616.6h2.5M291.0 611.1h6.0M294.5 605.5h2.5M294.5 600.0h2.5M294.5 594.4h2.5M294.5 588.8h2.5M293.0 583.3h4.0M294.5 577.7h2.5M294.5 572.1h2.5M294.5 566.6h2.5M294.5 561.0h2.5M291.0 555.5h6.0M294.5 549.9h2.5M294.5 544.3h2.5M294.5 538.8h2.5M294.5 533.2h2.5M293.0 527.7h4.0M294.5 522.1h2.5M294.5 516.5h2.5M294.5 511.0h2.5M294.5 505.4h2.5M291.0 499.8h6.0M294.5 494.3h2.5M294.5 488.7h2.5M294.5 483.2h2.5M294.5 477.6h2.5M293.0 472.0h4.0M294.5 466.5h2.5M294.5 460.9h2.5M294.5 455.3h2.5M294.5 449.8h2.5M291.0 444.2h6.0M294.5 438.7h2.5M294.5 433.1h2.5M294.5 427.5h2.5M294.5 422.0h2.5M293.0 416.4h4.0M294.5 410.8h2.5M294.5 405.3h2.5M294.5 399.7h2.5M294.5 394.2h2.5M291.0 388.6h6.0M294.5 383.0h2.5M294.5 377.5h2.5M294.5 371.9h2.5M294.5 366.4h2.5M293.0 360.8h4.0M294.5 355.2h2.5M294.5 349.7h2.5M294.5 344.1h2.5M294.5 338.5h2.5M291.0 333.0h6.0M294.5 327.4h2.5M294.5 321.9h2.5M294.5 316.3h2.5M294.5 310.7h2.5M293.0 305.2h4.0M294.5 299.6h2.5M294.5 294.0h2.5M294.5 288.5h2.5M294.5 282.9h2.5M291.0 277.4h6.0M294.5 271.8h2.5M294.5 266.2h2.5M294.5 260.7h2.5M294.5 255.1h2.5M293.0 249.6h4.0M294.5 244.0h2.5M294.5 238.4h2.5M294.5 232.9h2.5M294.5 227.3h2.5M291.0 221.7h6.0M294.5 216.2h2.5M294.5 210.6h2.5M294.5 205.1h2.5M294.5 199.5h2.5M293.0 193.9h4.0M294.5 188.4h2.5M294.5 182.8h2.5M294.5 177.2h2.5M294.5 171.7h2.5M291.0 166.1h6.0M294.5 160.6h2.5M294.5 155.0h2.5M294.5 149.4h2.5M294.5 143.9h2.5M293.0 138.3h4.0M294.5 132.7h2.5M294.5 127.2h2.5M294.5 121.6h2.5M294.5 116.1h2.5M291.0 110.5h6.0M294.5 104.9h2.5M294.5 99.4h2.5" stroke="#000" stroke-width="1" fill="none"/>
<g font-family="Liberation Sans, sans-serif" font-size="10.600" fill="#000" text-anchor="middle" letter-spacing="0.350">
<text x="348.0" y="85.800">-1200</text>
<text x="403.6" y="85.800">-1000</text>
<text x="459.2" y="85.800">-800</text>
<text x="514.8" y="85.800">-600</text>
<text x="570.5" y="85.800">-400</text>
<text x="626.1" y="85.800">-200</text>
<text x="681.3" y="85.800">0</text>
<text x="736.9" y="85.800">200</text>
<text x="792.5" y="85.800">400</text>
<text x="848.2" y="85.800">600</text>
<text x="903.8" y="85.800">800</text>
<text x="959.4" y="85.800">1000</text>
<text transform="translate(289 667.8) rotate(-90)" x="0" y="0">-1000</text>
<text transform="translate(289 612.2) rotate(-90)" x="0" y="0">-800</text>
<text transform="translate(289 556.6) rotate(-90)" x="0" y="0">-600</text>
<text transform="translate(289 500.9) rotate(-90)" x="0" y="0">-400</text>
<text transform="translate(289 445.3) rotate(-90)" x="0" y="0">-200</text>
<text transform="translate(289 388.6) rotate(-90)" x="0" y="0">0</text>
<text transform="translate(289 333.0) rotate(-90)" x="0" y="0">200</text>
<text transform="translate(289 277.4) rotate(-90)" x="0" y="0">400</text>
<text transform="translate(289 221.7) rotate(-90)" x="0" y="0">600</text>
<text transform="translate(289 166.1) rotate(-90)" x="0" y="0">800</text>
<text transform="translate(289 110.5) rotate(-90)" x="0" y="0">1000</text>
</g>
<text x="1027.500" y="85.700" font-family="Liberation Sans, sans-serif" font-size="9.200" textLength="41.500" lengthAdjust="spacingAndGlyphs">millimetres</text>
<path d="M1055.500 76v15.500M279 495.500h18" stroke="#000" stroke-width="1"/>
<path d="M281 84.500h13M285.500 80v9M289.500 80v9" stroke="#bdbdbd" stroke-width="1" stroke-dasharray="2 1.200" fill="none"/>
</svg>
<div class="abs" style="left:1071px;top:75px;width:17px;height:20px;background:#f0f0f0;border-left:1px solid #fff;border-top:1px solid #fff;border-right:1px solid #8a8a8a;border-bottom:2px solid #8a8a8a"></div>
<svg class="abs" style="left:1071px;top:75px" width="17" height="20" viewBox="0 0 17 20"><path d="M4.500 5.500h3M9.500 5.500h3" stroke="#000" stroke-width="1"/><path d="M4 8.500h9l-4.500 4.500z" fill="#000"/></svg>
<div class="abs" style="left:298px;top:95px;width:773px;height:590px;background:#f0f0f0"></div>
<div class="abs" style="left:540px;top:106px;width:285px;height:567px;background:#ffff80;border:1px solid #000"></div>
<div class="abs" style="left:825px;top:108px;width:1px;height:566px;background:#d4d4d4"></div>
<div class="abs" style="left:542px;top:673px;width:284px;height:1px;background:#d4d4d4"></div>
<div class="abs" style="left:587px;top:179px;width:192px;height:420px;background:#0a0a0a"></div>
<!--RELIEF-->
<svg class="abs" style="left:600px;top:195px" width="170" height="390" viewBox="600 195 170 390">
<defs>
<linearGradient id="rbgh" x1="0" y1="0" x2="1" y2="0"><stop offset="0" stop-color="#1a1a1a"/><stop offset="0.040" stop-color="#626262"/><stop offset="0.130" stop-color="#a4a4a4"/><stop offset="0.280" stop-color="#a0a0a0"/><stop offset="0.400" stop-color="#848484"/><stop offset="0.500" stop-color="#6c6c6c"/><stop offset="0.600" stop-color="#848484"/><stop offset="0.720" stop-color="#a0a0a0"/><stop offset="0.870" stop-color="#a4a4a4"/><stop offset="0.960" stop-color="#626262"/><stop offset="1" stop-color="#1a1a1a"/></linearGradient>
<radialGradient id="rblob"><stop offset="0" stop-color="#f4f4f4" stop-opacity="0.95"/><stop offset="0.500" stop-color="#e6e6e6" stop-opacity="0.800"/><stop offset="1" stop-color="#aaa" stop-opacity="0"/></radialGradient>
<radialGradient id="rglow"><stop offset="0" stop-color="#dcdcdc" stop-opacity="0.650"/><stop offset="0.500" stop-color="#d0d0d0" stop-opacity="0.400"/><stop offset="1" stop-color="#aaa" stop-opacity="0"/></radialGradient>
<radialGradient id="rdark"><stop offset="0" stop-color="#000" stop-opacity="0.850"/><stop offset="0.600" stop-color="#000" stop-opacity="0.500"/><stop offset="1" stop-color="#000" stop-opacity="0"/></radialGradient>
<radialGradient id="rpet" cx="0.5" cy="0.5" r="0.5"><stop offset="0" stop-color="#f0f0f0"/><stop offset="0.550" stop-color="#c6c6c6"/><stop offset="0.850" stop-color="#8a8a8a"/><stop offset="1" stop-color="#484848"/></radialGradient>
<radialGradient id="rflw" gradientUnits="userSpaceOnUse" cx="0" cy="0" r="20.500"><stop offset="0" stop-color="#808080"/><stop offset="0.420" stop-color="#8c8c8c"/><stop offset="0.720" stop-color="#c2c2c2"/><stop offset="1" stop-color="#b0b0b0"/></radialGradient>
<radialGradient id="rflw2"><stop offset="0" stop-color="#c8c8c8"/><stop offset="0.600" stop-color="#b0b0b0"/><stop offset="1" stop-color="#484848"/></radialGradient>
<radialGradient id="rdisc2"><stop offset="0" stop-color="#b0b0b0"/><stop offset="0.450" stop-color="#eeeeee"/><stop offset="1" stop-color="#8a8a8a"/></radialGradient>
<linearGradient id="rarch" x1="0" y1="0" x2="0" y2="1"><stop offset="0" stop-color="#9a9a9a"/><stop offset="0.450" stop-color="#dcdcdc"/><stop offset="1" stop-color="#a0a0a0"/></linearGradient>
<radialGradient id="rdisc"><stop offset="0" stop-color="#8a8a8a"/><stop offset="0.350" stop-color="#a0a0a0"/><stop offset="0.600" stop-color="#f2f2f2"/><stop offset="1" stop-color="#a8a8a8"/></radialGradient>
<linearGradient id="rleaf" x1="0" y1="0" x2="0" y2="1"><stop offset="0" stop-color="#8a8a8a"/><stop offset="0.070" stop-color="#e2e2e2"/><stop offset="0.240" stop-color="#c2c2c2"/><stop offset="1" stop-color="#a0a0a0"/></linearGradient>
<linearGradient id="rleafo" x1="0" y1="0" x2="1" y2="0"><stop offset="0" stop-color="#b8b8b8"/><stop offset="0.500" stop-color="#8c8c8c"/><stop offset="1" stop-color="#b8b8b8"/></linearGradient>
<linearGradient id="rband" x1="0" y1="0" x2="0" y2="1"><stop offset="0" stop-color="#2a2a2a"/><stop offset="0.400" stop-color="#e8e8e8"/><stop offset="1" stop-color="#5a5a5a"/></linearGradient>
<linearGradient id="rtopv" x1="0" y1="0" x2="0" y2="1"><stop offset="0" stop-color="#d8d8d8"/><stop offset="0.750" stop-color="#b0b0b0"/><stop offset="1" stop-color="#3a3a3a"/></linearGradient>
<linearGradient id="rvert" x1="0" y1="0" x2="0" y2="1"><stop offset="0" stop-color="#000" stop-opacity="0.450"/><stop offset="0.120" stop-color="#000" stop-opacity="0"/><stop offset="0.550" stop-color="#000" stop-opacity="0.050"/><stop offset="0.700" stop-color="#000" stop-opacity="0.100"/><stop offset="1" stop-color="#000" stop-opacity="0"/></linearGradient>
<filter id="rb05" x="-60%" y="-60%" width="220%" height="220%"><feGaussianBlur stdDeviation="0.400"/></filter>
<filter id="rb06" x="-60%" y="-60%" width="220%" height="220%"><feGaussianBlur stdDeviation="0.550"/></filter>
<filter id="rb1" x="-60%" y="-60%" width="220%" height="220%"><feGaussianBlur stdDeviation="0.700"/></filter>
<filter id="rb2" x="-60%" y="-60%" width="220%" height="220%"><feGaussianBlur stdDeviation="2"/></filter>
<filter id="rb3" x="-60%" y="-60%" width="220%" height="220%"><feGaussianBlur stdDeviation="3"/></filter>
<filter id="rb4" x="-60%" y="-60%" width="220%" height="220%"><feGaussianBlur stdDeviation="4"/></filter>
<clipPath id="rclip"><rect x="619.6" y="208" width="126.1" height="361"/></clipPath>
</defs>
<rect x="612.5" y="201.700" width="140.500" height="374" fill="#fbfbfb"/>
<rect x="612" y="212" width="1" height="364" fill="#fbfbfb"/>
<g clip-path="url(#rclip)">
<rect x="619.6" y="208" width="126.1" height="361" fill="url(#rbgh)"/>
<rect x="619.6" y="258" width="126.1" height="311" fill="url(#rvert)" opacity="0.500"/>
<ellipse cx="642" cy="302" rx="24" ry="34" fill="url(#rglow)"/><ellipse cx="723" cy="302" rx="24" ry="34" fill="url(#rglow)"/><ellipse cx="641" cy="301" rx="15" ry="22" fill="url(#rglow)" opacity="0.800"/><ellipse cx="724" cy="301" rx="15" ry="22" fill="url(#rglow)" opacity="0.800"/>
<ellipse cx="640" cy="440" rx="13" ry="50" fill="url(#rglow)" opacity="0.600"/><ellipse cx="725" cy="440" rx="13" ry="50" fill="url(#rglow)" opacity="0.600"/>
<path d="M682.65 262 V 296" stroke="#0a0a0a" stroke-width="5" filter="url(#rb2)"/>
<path d="M682.65 262 V 296" stroke="#0a0a0a" stroke-width="12" filter="url(#rb4)" opacity="0.600"/>
<path d="M682.65 294 C 689.4 309.057 709.65 330.471 709.65 360.92 C 709.65 389.839 697.5 407.19 682.65 413.5 C 667.8 407.19 655.65 389.839 655.65 360.92 C 655.65 330.471 675.9 309.057 682.65 294Z" fill="#0a0a0a" stroke="#0a0a0a" stroke-width="13" stroke-linejoin="round" filter="url(#rb3)"/>
<ellipse cx="682.65" cy="424" rx="23" ry="16" fill="#0a0a0a" filter="url(#rb3)"/>
<ellipse cx="682.65" cy="462" rx="27" ry="29" fill="#0a0a0a" filter="url(#rb3)"/>
<path d="M682.65 486 V 540" stroke="#2a2a2a" stroke-width="4" filter="url(#rb2)" opacity="0.800"/>
<ellipse cx="682.65" cy="508" rx="74" ry="32" fill="url(#rblob)"/>
<ellipse cx="682.65" cy="512" rx="50" ry="13" fill="#ececec" filter="url(#rb4)" opacity="0.800"/>
<path d="M682.65 480v70" stroke="#777" stroke-width="1.500" filter="url(#rb1)" opacity="0.700"/>
<path d="M615.6 516 Q 682.65 548 749.7 516 L 749.7 520 Q 682.65 578 615.6 520Z" fill="#141414" filter="url(#rb2)"/>
<ellipse cx="682.65" cy="539" rx="34" ry="6" fill="#141414" filter="url(#rb2)"/>
<rect x="618.6" y="208" width="3" height="361" fill="#0c0c0c" filter="url(#rb1)"/>
<rect x="743.7" y="208" width="3" height="361" fill="#0c0c0c" filter="url(#rb1)"/>
<path d="M682.65 294 C 689.4 309.057 709.65 330.471 709.65 360.92 C 709.65 389.839 697.5 407.19 682.65 413.5 C 667.8 407.19 655.65 389.839 655.65 360.92 C 655.65 330.471 675.9 309.057 682.65 294Z" fill="url(#rleafo)" stroke="#d0d0d0" stroke-width="0.800"/>
<path d="M682.65 304 C 688.775 317.797 707.15 337.419 707.15 365.32 C 707.15 391.819 696.125 407.718 682.65 413.5 C 669.175 407.718 658.15 391.819 658.15 365.32 C 658.15 337.419 676.525 317.797 682.65 304Z" fill="#8a8a8a" stroke="#c4c4c4" stroke-width="1"/>
<path d="M682.65 321 C 690.35 331.101 704.65 347.677 704.65 372.8 C 704.65 395.185 694.75 408.616 682.65 413.5 C 670.55 408.616 660.65 395.185 660.65 372.8 C 660.65 347.677 674.95 331.101 682.65 321Z" fill="#7c7c7c" stroke="#5a5a5a" stroke-width="0.800"/>
<path d="M682.65 331.5 C 692.65 338.388 702.65 353.082 702.65 377.42 C 702.65 397.264 693.65 409.17 682.65 413.5 C 671.65 409.17 662.65 397.264 662.65 377.42 C 662.65 353.082 672.65 338.388 682.65 331.5Z" fill="url(#rleaf)" stroke="#2a2a2a" stroke-width="1.700" filter="url(#rb1)"/>
<path d="M682.65 343.5 C 692.756 347.969 698.95 360.513 698.95 382.7 C 698.95 399.64 691.615 409.804 682.65 413.5 C 673.685 409.804 666.35 399.64 666.35 382.7 C 666.35 360.513 672.544 347.969 682.65 343.5Z" fill="url(#rleaf)" stroke="#2a2a2a" stroke-width="1.700" filter="url(#rb1)"/>
<path d="M682.65 355.5 C 690.768 358.813 694.95 369.207 694.95 387.98 C 694.95 402.016 689.415 410.438 682.65 413.5 C 675.885 410.438 670.35 402.016 670.35 387.98 C 670.35 369.207 674.532 358.813 682.65 355.5Z" fill="url(#rleaf)" stroke="#2a2a2a" stroke-width="1.700" filter="url(#rb1)"/>
<path d="M682.65 366 C 688.128 368.713 690.95 377.225 690.95 392.6 C 690.95 404.095 687.215 410.992 682.65 413.5 C 678.085 410.992 674.35 404.095 674.35 392.6 C 674.35 377.225 677.172 368.713 682.65 366Z" fill="url(#rleaf)" stroke="#2a2a2a" stroke-width="1.700" filter="url(#rb1)"/>
<path d="M682.65 375 C 684.8 378.234 686.95 385.133 686.95 396.56 C 686.95 405.877 685.015 411.467 682.65 413.5 C 680.285 411.467 678.35 405.877 678.35 396.56 C 678.35 385.133 680.5 378.234 682.65 375Z" fill="url(#rleaf)" stroke="#2a2a2a" stroke-width="1.700" filter="url(#rb1)"/>
<ellipse cx="682.65" cy="423.6" rx="19" ry="12.500" fill="#1c1c1c" filter="url(#rb1)"/>
<path d="M687.607 424.122L700 425.493" stroke="#5a5a5a" stroke-width="3.300" stroke-linecap="round"/>
<path d="M687.607 424.122L700 425.493" stroke="#f0f0f0" stroke-width="2.100" stroke-linecap="round"/>
<path d="M687.269 425.131L698.818 429.149" stroke="#5a5a5a" stroke-width="3.300" stroke-linecap="round"/>
<path d="M687.269 425.131L698.818 429.149" stroke="#f0f0f0" stroke-width="2.100" stroke-linecap="round"/>
<path d="M686.617 426.035L696.534 432.427" stroke="#5a5a5a" stroke-width="3.300" stroke-linecap="round"/>
<path d="M686.617 426.035L696.534 432.427" stroke="#f0f0f0" stroke-width="2.100" stroke-linecap="round"/>
<path d="M685.694 426.773L693.303 435.104" stroke="#5a5a5a" stroke-width="3.300" stroke-linecap="round"/>
<path d="M685.694 426.773L693.303 435.104" stroke="#f0f0f0" stroke-width="2.100" stroke-linecap="round"/>
<path d="M679.606 426.773L671.997 435.104" stroke="#5a5a5a" stroke-width="3.300" stroke-linecap="round"/>
<path d="M679.606 426.773L671.997 435.104" stroke="#f0f0f0" stroke-width="2.100" stroke-linecap="round"/>
<path d="M678.683 426.035L668.766 432.427" stroke="#5a5a5a" stroke-width="3.300" stroke-linecap="round"/>
<path d="M678.683 426.035L668.766 432.427" stroke="#f0f0f0" stroke-width="2.100" stroke-linecap="round"/>
<path d="M678.031 425.131L666.482 429.149" stroke="#5a5a5a" stroke-width="3.300" stroke-linecap="round"/>
<path d="M678.031 425.131L666.482 429.149" stroke="#f0f0f0" stroke-width="2.100" stroke-linecap="round"/>
<path d="M677.693 424.122L665.3 425.493" stroke="#5a5a5a" stroke-width="3.300" stroke-linecap="round"/>
<path d="M677.693 424.122L665.3 425.493" stroke="#f0f0f0" stroke-width="2.100" stroke-linecap="round"/>
<path d="M677.693 423.078L665.3 421.707" stroke="#5a5a5a" stroke-width="3.300" stroke-linecap="round"/>
<path d="M677.693 423.078L665.3 421.707" stroke="#f0f0f0" stroke-width="2.100" stroke-linecap="round"/>
<path d="M678.031 422.069L666.482 418.051" stroke="#5a5a5a" stroke-width="3.300" stroke-linecap="round"/>
<path d="M678.031 422.069L666.482 418.051" stroke="#f0f0f0" stroke-width="2.100" stroke-linecap="round"/>
<path d="M678.683 421.165L668.766 414.773" stroke="#5a5a5a" stroke-width="3.300" stroke-linecap="round"/>
<path d="M678.683 421.165L668.766 414.773" stroke="#f0f0f0" stroke-width="2.100" stroke-linecap="round"/>
<path d="M679.606 420.427L671.997 412.096" stroke="#5a5a5a" stroke-width="3.300" stroke-linecap="round"/>
<path d="M679.606 420.427L671.997 412.096" stroke="#f0f0f0" stroke-width="2.100" stroke-linecap="round"/>
<path d="M685.694 420.427L693.303 412.096" stroke="#5a5a5a" stroke-width="3.300" stroke-linecap="round"/>
<path d="M685.694 420.427L693.303 412.096" stroke="#f0f0f0" stroke-width="2.100" stroke-linecap="round"/>
<path d="M686.617 421.165L696.534 414.773" stroke="#5a5a5a" stroke-width="3.300" stroke-linecap="round"/>
<path d="M686.617 421.165L696.534 414.773" stroke="#f0f0f0" stroke-width="2.100" stroke-linecap="round"/>
<path d="M687.269 422.069L698.818 418.051" stroke="#5a5a5a" stroke-width="3.300" stroke-linecap="round"/>
<path d="M687.269 422.069L698.818 418.051" stroke="#f0f0f0" stroke-width="2.100" stroke-linecap="round"/>
<path d="M687.607 423.078L700 421.707" stroke="#5a5a5a" stroke-width="3.300" stroke-linecap="round"/>
<path d="M687.607 423.078L700 421.707" stroke="#f0f0f0" stroke-width="2.100" stroke-linecap="round"/>
<circle cx="682.65" cy="423.6" r="4.200" fill="url(#rdisc2)" stroke="#444" stroke-width="0.600"/>
<path d="M665.65 446.500 C 665.65 424 699.65 424 699.65 446.500 L 689.15 446.500 C 687.65 438 677.65 438 676.15 446.500Z" fill="url(#rarch)" stroke="#3a3a3a" stroke-width="0.600"/>
<ellipse cx="682.65" cy="465.5" rx="22" ry="22" fill="#0c0c0c" filter="url(#rb2)"/>
<path d="M663.65 460 C 665.65 450 676.65 444 682.65 447 C 688.65 444 699.65 450 701.65 460Z" fill="url(#rpet)" stroke="#2a2a2a" stroke-width="0.500"/>
<path d="M671.65 458 C 673.65 449 678.65 441 682.65 441.500 C 686.65 441 691.65 449 693.65 458Z" fill="#cdcdcd" stroke="#2a2a2a" stroke-width="0.500"/>
<path d="M668.65 456 C 670.65 450 677.65 446 682.65 446 C 687.65 446 694.65 450 696.65 456" fill="none" stroke="#555" stroke-width="0.700"/>
<ellipse cx="693.464" cy="462.98" rx="10.5" ry="5.200" transform="rotate(-8 693.464 462.98)" fill="url(#rpet)" stroke="#303030" stroke-width="0.500"/>
<ellipse cx="671.836" cy="462.98" rx="10.5" ry="5.200" transform="rotate(188 671.836 462.98)" fill="url(#rpet)" stroke="#303030" stroke-width="0.500"/>
<ellipse cx="693.498" cy="467.205" rx="10.75" ry="5.200" transform="rotate(14 693.498 467.205)" fill="url(#rpet)" stroke="#303030" stroke-width="0.500"/>
<ellipse cx="671.802" cy="467.205" rx="10.75" ry="5.200" transform="rotate(166 671.802 467.205)" fill="url(#rpet)" stroke="#303030" stroke-width="0.500"/>
<ellipse cx="691.695" cy="471.071" rx="10.75" ry="5.200" transform="rotate(36 691.695 471.071)" fill="url(#rpet)" stroke="#303030" stroke-width="0.500"/>
<ellipse cx="673.605" cy="471.071" rx="10.75" ry="5.200" transform="rotate(144 673.605 471.071)" fill="url(#rpet)" stroke="#303030" stroke-width="0.500"/>
<ellipse cx="688.881" cy="474.094" rx="11" ry="5.200" transform="rotate(57 688.881 474.094)" fill="url(#rpet)" stroke="#303030" stroke-width="0.500"/>
<ellipse cx="676.419" cy="474.094" rx="11" ry="5.200" transform="rotate(123 676.419 474.094)" fill="url(#rpet)" stroke="#303030" stroke-width="0.500"/>
<ellipse cx="685.678" cy="475.801" rx="11.25" ry="5.200" transform="rotate(75 685.678 475.801)" fill="url(#rpet)" stroke="#303030" stroke-width="0.500"/>
<ellipse cx="679.622" cy="475.801" rx="11.25" ry="5.200" transform="rotate(105 679.622 475.801)" fill="url(#rpet)" stroke="#303030" stroke-width="0.500"/>
<ellipse cx="682.65" cy="476.46" rx="11.5" ry="5.200" transform="rotate(90 682.65 476.46)" fill="url(#rpet)" stroke="#303030" stroke-width="0.500"/>
<ellipse cx="682.65" cy="464.5" rx="4.800" ry="7" fill="url(#rdisc2)" stroke="#444" stroke-width="0.600"/>
<path d="M617.6 519 Q 682.65 576 747.7 519 L 747.7 575 L 617.6 575Z" fill="#8a8a8a"/>
<path d="M617.6 520.5 Q 682.65 577.5 747.7 520.5" fill="none" stroke="#e6e6e6" stroke-width="3"/>
<path d="M617.6 524.5 Q 682.65 580.3 747.7 524.5" fill="none" stroke="#9c9c9c" stroke-width="1.5"/>
<path d="M617.6 527 Q 682.65 581.6 747.7 527" fill="none" stroke="#3a3a3a" stroke-width="1"/>
<path d="M617.6 530 Q 682.65 583.4 747.7 530" fill="none" stroke="#e2e2e2" stroke-width="4"/>
<path d="M617.6 534.5 Q 682.65 586.7 747.7 534.5" fill="none" stroke="#8c8c8c" stroke-width="1.5"/>
<path d="M617.6 537 Q 682.65 588 747.7 537" fill="none" stroke="#383838" stroke-width="1"/>
<path d="M617.6 541 Q 682.65 590.8 747.7 541" fill="none" stroke="#dedede" stroke-width="4.5"/>
<path d="M617.6 546 Q 682.65 594.6 747.7 546" fill="none" stroke="#9a9a9a" stroke-width="2"/>
<path d="M617.6 549 Q 682.65 596.4 747.7 549" fill="none" stroke="#505050" stroke-width="1.5"/>
<path d="M617.6 553 Q 682.65 599.2 747.7 553" fill="none" stroke="#d0d0d0" stroke-width="4"/>
<ellipse cx="623.6" cy="554" rx="3" ry="6" transform="rotate(-15 623.6 554)" fill="url(#rpet)" stroke="#222" stroke-width="0.500"/>
<ellipse cx="629.6" cy="558" rx="3" ry="6.5" transform="rotate(-35 629.6 558)" fill="url(#rpet)" stroke="#222" stroke-width="0.500"/>
<ellipse cx="635.6" cy="562" rx="3" ry="6" transform="rotate(-55 635.6 562)" fill="url(#rpet)" stroke="#222" stroke-width="0.500"/>
<ellipse cx="642.6" cy="566" rx="3" ry="5.5" transform="rotate(-70 642.6 566)" fill="url(#rpet)" stroke="#222" stroke-width="0.500"/>
<ellipse cx="624.6" cy="563" rx="3.5" ry="5" transform="rotate(-10 624.6 563)" fill="url(#rpet)" stroke="#222" stroke-width="0.500"/>
<ellipse cx="741.7" cy="554" rx="3" ry="6" transform="rotate(15 741.7 554)" fill="url(#rpet)" stroke="#222" stroke-width="0.500"/>
<ellipse cx="735.7" cy="558" rx="3" ry="6.5" transform="rotate(35 735.7 558)" fill="url(#rpet)" stroke="#222" stroke-width="0.500"/>
<ellipse cx="729.7" cy="562" rx="3" ry="6" transform="rotate(55 729.7 562)" fill="url(#rpet)" stroke="#222" stroke-width="0.500"/>
<ellipse cx="722.7" cy="566" rx="3" ry="5.5" transform="rotate(70 722.7 566)" fill="url(#rpet)" stroke="#222" stroke-width="0.500"/>
<ellipse cx="740.7" cy="563" rx="3.5" ry="5" transform="rotate(10 740.7 563)" fill="url(#rpet)" stroke="#222" stroke-width="0.500"/>
<rect x="619.6" y="567.500" width="126.1" height="2" fill="#111"/>
<path d="M615.6 254 H749.7 V266 Q 737.7 282 716 280 Q 700 268 682.65 268 Q 665 268 649 280 Q 627.6 282 615.6 266Z" fill="#121212" filter="url(#rb3)"/>
<path d="M619.6 208 H745.7 V259 Q 735.7 266 716 262 Q 682.65 255 649 262 Q 629.6 266 619.6 259Z" fill="#747474" filter="url(#rb1)"/>
<rect x="619.6" y="208" width="126.1" height="1.800" fill="#0a0a0a"/>
<path d="M629 220.500 C 640 209 668 208.500 682.65 212.500 C 697 208.500 725 209 736.300 220.500 C 722 222.500 702 222 682.65 215.500 C 663 222 643 222.500 629 220.500Z" fill="#d6d6d6" stroke="#a8a8a8" stroke-width="0.600" filter="url(#rb05)"/>
<path d="M640 217 C 652 212 668 212 682.65 214 C 697 212 713 212 725 217" fill="none" stroke="#ececec" stroke-width="2.500" filter="url(#rb1)"/>
<path d="M618.6 226.3 Q 638 220.8 658 221.8 C 668 222.1 674 214.8 682.65 214.8 C 691.300 214.8 697.300 222.1 707.300 221.8 Q 727 220.8 746.7 226.3" fill="none" stroke="#2a2a2a" stroke-width="1.2"/>
<path d="M618.6 228.3 Q 638 222.8 658 223.8 C 668 224.1 674 216.8 682.65 216.8 C 691.300 216.8 697.300 224.1 707.300 223.8 Q 727 222.8 746.7 228.3" fill="none" stroke="#e2e2e2" stroke-width="2.6"/>
<path d="M618.6 230.6 Q 638 225.1 658 226.1 C 668 226.4 674 219.1 682.65 219.1 C 691.300 219.1 697.300 226.4 707.300 226.1 Q 727 225.1 746.7 230.6" fill="none" stroke="#8a8a8a" stroke-width="1.2"/>
<path d="M618.6 232 Q 638 226.5 658 227.5 C 668 227.8 674 220.5 682.65 220.5 C 691.300 220.5 697.300 227.8 707.300 227.5 Q 727 226.5 746.7 232" fill="none" stroke="#222" stroke-width="1.2"/>
<path d="M618.6 235.5 Q 638 230 658 231 C 668 231.3 674 224 682.65 224 C 691.300 224 697.300 231.3 707.300 231 Q 727 230 746.7 235.5" fill="none" stroke="#d2d2d2" stroke-width="5.2"/>
<path d="M618.6 239.2 Q 638 233.7 658 234.7 C 668 235 674 227.7 682.65 227.7 C 691.300 227.7 697.300 235 707.300 234.7 Q 727 233.7 746.7 239.2" fill="none" stroke="#8c8c8c" stroke-width="1.5"/>
<path d="M618.6 240.8 Q 638 235.3 658 236.3 C 668 236.6 674 229.3 682.65 229.3 C 691.300 229.3 697.300 236.6 707.300 236.3 Q 727 235.3 746.7 240.8" fill="none" stroke="#242424" stroke-width="1.2"/>
<path d="M618.6 244.5 Q 638 239 658 240 C 668 240.3 674 233 682.65 233 C 691.300 233 697.300 240.3 707.300 240 Q 727 239 746.7 244.5" fill="none" stroke="#c8c8c8" stroke-width="5.5"/>
<path d="M618.6 248.5 Q 638 243 658 244 C 668 244.3 674 237 682.65 237 C 691.300 237 697.300 244.3 707.300 244 Q 727 243 746.7 248.5" fill="none" stroke="#888" stroke-width="1.5"/>
<path d="M668 262 L 668 236 Q 682.65 226 697.300 236 L 697.300 262Z" fill="#a0a0a0"/>
<path d="M669 241 Q 682.65 222 696.300 241" fill="none" stroke="#262626" stroke-width="1.100"/>
<path d="M669.500 241.500 Q 682.65 224.500 695.800 241.500 L 695 240 Q 682.65 236 670.300 240Z" fill="#dedede"/>
<path d="M669.500 240 Q 682.65 223.500 695.800 240 L 694.500 240.500 Q 682.65 233 670.800 240.500Z" fill="#e6e6e6"/>
<path d="M671 241.500 Q 682.65 235 694.300 241.500" fill="none" stroke="#2a2a2a" stroke-width="1.100"/>
<path d="M672 249 Q 672 241 682.65 239.500 Q 693.300 241 693.300 249 Q 682.65 245 672 249Z" fill="#d8d8d8"/>
<path d="M672.500 249.500 Q 682.65 244.500 692.800 249.500" fill="none" stroke="#2a2a2a" stroke-width="1.100"/>
<path d="M673.500 257.500 v-5 q 9.15 -5.500 18.300 0 v5 q -9 2.500 -18.300 0z" fill="#dcdcdc" stroke="#3a3a3a" stroke-width="0.700"/>
<rect x="677.800" y="252" width="9.800" height="4.200" rx="2.100" fill="#808080" stroke="#f0f0f0" stroke-width="0.800"/>
<path d="M623.1 258 C 621.1 250 624.6 240 632.6 234" fill="none" stroke="#ececec" stroke-width="4.500" filter="url(#rb05)"/>
<path d="M626.6 258 C 625.1 251 628.1 243 634.6 238" fill="none" stroke="#3a3a3a" stroke-width="0.900"/>
<ellipse cx="629.6" cy="250" rx="4.500" ry="7" fill="#cfcfcf" stroke="#555" stroke-width="0.500"/>
<ellipse cx="622.6" cy="213.5" rx="2.6" ry="3.5" transform="rotate(0 622.6 213.5)" fill="url(#rpet)" stroke="#333" stroke-width="0.400"/>
<ellipse cx="628.6" cy="212.5" rx="2.5" ry="4" transform="rotate(20 628.6 212.5)" fill="url(#rpet)" stroke="#333" stroke-width="0.400"/>
<ellipse cx="634.6" cy="211.5" rx="2.5" ry="4" transform="rotate(40 634.6 211.5)" fill="url(#rpet)" stroke="#333" stroke-width="0.400"/>
<ellipse cx="640.6" cy="211" rx="2.4" ry="3.8" transform="rotate(60 640.6 211)" fill="url(#rpet)" stroke="#333" stroke-width="0.400"/>
<ellipse cx="623.6" cy="220" rx="3" ry="4.5" transform="rotate(-20 623.6 220)" fill="url(#rpet)" stroke="#333" stroke-width="0.400"/>
<ellipse cx="629.6" cy="219" rx="2.2" ry="5" transform="rotate(35 629.6 219)" fill="url(#rpet)" stroke="#333" stroke-width="0.400"/>
<path d="M742.2 258 C 744.2 250 740.7 240 732.7 234" fill="none" stroke="#ececec" stroke-width="4.500" filter="url(#rb05)"/>
<path d="M738.7 258 C 740.2 251 737.2 243 730.7 238" fill="none" stroke="#3a3a3a" stroke-width="0.900"/>
<ellipse cx="735.7" cy="250" rx="4.500" ry="7" fill="#cfcfcf" stroke="#555" stroke-width="0.500"/>
<ellipse cx="742.7" cy="213.5" rx="2.6" ry="3.5" transform="rotate(0 742.7 213.5)" fill="url(#rpet)" stroke="#333" stroke-width="0.400"/>
<ellipse cx="736.7" cy="212.5" rx="2.5" ry="4" transform="rotate(-20 736.7 212.5)" fill="url(#rpet)" stroke="#333" stroke-width="0.400"/>
<ellipse cx="730.7" cy="211.5" rx="2.5" ry="4" transform="rotate(-40 730.7 211.5)" fill="url(#rpet)" stroke="#333" stroke-width="0.400"/>
<ellipse cx="724.7" cy="211" rx="2.4" ry="3.8" transform="rotate(-60 724.7 211)" fill="url(#rpet)" stroke="#333" stroke-width="0.400"/>
<ellipse cx="741.7" cy="220" rx="3" ry="4.5" transform="rotate(20 741.7 220)" fill="url(#rpet)" stroke="#333" stroke-width="0.400"/>
<ellipse cx="735.7" cy="219" rx="2.2" ry="5" transform="rotate(-35 735.7 219)" fill="url(#rpet)" stroke="#333" stroke-width="0.400"/>
<g transform="translate(649.2 249.7) scale(1 1)">
<circle cx="0" cy="1.500" r="23.500" fill="#101010" filter="url(#rb2)"/>
<g><circle cx="19.41" cy="2.73" r="5.600" fill="url(#rflw2)"/><circle cx="16.30" cy="10.88" r="5.600" fill="url(#rflw2)"/><circle cx="9.97" cy="16.88" r="5.600" fill="url(#rflw2)"/><circle cx="1.66" cy="19.53" r="5.600" fill="url(#rflw2)"/><circle cx="-6.98" cy="18.32" r="5.600" fill="url(#rflw2)"/><circle cx="-14.23" cy="13.47" r="5.600" fill="url(#rflw2)"/><circle cx="-18.67" cy="5.96" r="5.600" fill="url(#rflw2)"/><circle cx="-19.41" cy="-2.73" r="5.600" fill="url(#rflw2)"/><circle cx="-16.30" cy="-10.88" r="5.600" fill="url(#rflw2)"/><circle cx="-9.97" cy="-16.88" r="5.600" fill="url(#rflw2)"/><circle cx="-1.66" cy="-19.53" r="5.600" fill="url(#rflw2)"/><circle cx="6.98" cy="-18.32" r="5.600" fill="url(#rflw2)"/><circle cx="14.23" cy="-13.47" r="5.600" fill="url(#rflw2)"/><circle cx="18.67" cy="-5.96" r="5.600" fill="url(#rflw2)"/><circle cx="0" cy="0" r="20.500" fill="url(#rflw)"/></g>
<path d="M3.90 -7.33 Q 15.30 -6.18 22.42 -1.91" fill="none" stroke="#f0f0f0" stroke-width="2.200" opacity="0.450" transform="rotate(9)"/>
<path d="M3.90 -7.33 Q 15.30 -6.18 23.91 -2.03" fill="none" stroke="#4a4a4a" stroke-width="2.400" opacity="0.550" transform="rotate(-5)" filter="url(#rb05)"/>
<path d="M3.90 -7.33 Q 15.30 -6.18 24.91 -2.12" fill="none" stroke="#383838" stroke-width="0.900"/>
<path d="M6.69 -4.91 Q 16.47 1.07 21.03 8.01" fill="none" stroke="#f0f0f0" stroke-width="2.200" opacity="0.450" transform="rotate(9)"/>
<path d="M6.69 -4.91 Q 16.47 1.07 22.43 8.54" fill="none" stroke="#4a4a4a" stroke-width="2.400" opacity="0.550" transform="rotate(-5)" filter="url(#rb05)"/>
<path d="M6.69 -4.91 Q 16.47 1.07 23.36 8.90" fill="none" stroke="#383838" stroke-width="0.900"/>
<path d="M8.16 -1.52 Q 14.37 8.11 15.47 16.34" fill="none" stroke="#f0f0f0" stroke-width="2.200" opacity="0.450" transform="rotate(9)"/>
<path d="M8.16 -1.52 Q 14.37 8.11 16.50 17.43" fill="none" stroke="#4a4a4a" stroke-width="2.400" opacity="0.550" transform="rotate(-5)" filter="url(#rb05)"/>
<path d="M8.16 -1.52 Q 14.37 8.11 17.19 18.16" fill="none" stroke="#383838" stroke-width="0.900"/>
<path d="M8.01 2.17 Q 9.43 13.54 6.85 21.43" fill="none" stroke="#f0f0f0" stroke-width="2.200" opacity="0.450" transform="rotate(9)"/>
<path d="M8.01 2.17 Q 9.43 13.54 7.30 22.86" fill="none" stroke="#4a4a4a" stroke-width="2.400" opacity="0.550" transform="rotate(-5)" filter="url(#rb05)"/>
<path d="M8.01 2.17 Q 9.43 13.54 7.61 23.81" fill="none" stroke="#383838" stroke-width="0.900"/>
<path d="M6.28 5.43 Q 2.62 16.29 -3.13 22.28" fill="none" stroke="#f0f0f0" stroke-width="2.200" opacity="0.450" transform="rotate(9)"/>
<path d="M6.28 5.43 Q 2.62 16.29 -3.34 23.77" fill="none" stroke="#4a4a4a" stroke-width="2.400" opacity="0.550" transform="rotate(-5)" filter="url(#rb05)"/>
<path d="M6.28 5.43 Q 2.62 16.29 -3.48 24.76" fill="none" stroke="#383838" stroke-width="0.900"/>
<path d="M3.30 7.62 Q -4.71 15.81 -12.49 18.72" fill="none" stroke="#f0f0f0" stroke-width="2.200" opacity="0.450" transform="rotate(9)"/>
<path d="M3.30 7.62 Q -4.71 15.81 -13.32 19.96" fill="none" stroke="#4a4a4a" stroke-width="2.400" opacity="0.550" transform="rotate(-5)" filter="url(#rb05)"/>
<path d="M3.30 7.62 Q -4.71 15.81 -13.88 20.80" fill="none" stroke="#383838" stroke-width="0.900"/>
<path d="M-0.33 8.29 Q -11.10 12.21 -19.37 11.44" fill="none" stroke="#f0f0f0" stroke-width="2.200" opacity="0.450" transform="rotate(9)"/>
<path d="M-0.33 8.29 Q -11.10 12.21 -20.66 12.21" fill="none" stroke="#4a4a4a" stroke-width="2.400" opacity="0.550" transform="rotate(-5)" filter="url(#rb05)"/>
<path d="M-0.33 8.29 Q -11.10 12.21 -21.52 12.72" fill="none" stroke="#383838" stroke-width="0.900"/>
<path d="M-3.90 7.33 Q -15.30 6.18 -22.42 1.91" fill="none" stroke="#f0f0f0" stroke-width="2.200" opacity="0.450" transform="rotate(9)"/>
<path d="M-3.90 7.33 Q -15.30 6.18 -23.91 2.03" fill="none" stroke="#4a4a4a" stroke-width="2.400" opacity="0.550" transform="rotate(-5)" filter="url(#rb05)"/>
<path d="M-3.90 7.33 Q -15.30 6.18 -24.91 2.12" fill="none" stroke="#383838" stroke-width="0.900"/>
<path d="M-6.69 4.91 Q -16.47 -1.07 -21.03 -8.01" fill="none" stroke="#f0f0f0" stroke-width="2.200" opacity="0.450" transform="rotate(9)"/>
<path d="M-6.69 4.91 Q -16.47 -1.07 -22.43 -8.54" fill="none" stroke="#4a4a4a" stroke-width="2.400" opacity="0.550" transform="rotate(-5)" filter="url(#rb05)"/>
<path d="M-6.69 4.91 Q -16.47 -1.07 -23.36 -8.90" fill="none" stroke="#383838" stroke-width="0.900"/>
<path d="M-8.16 1.52 Q -14.37 -8.11 -15.47 -16.34" fill="none" stroke="#f0f0f0" stroke-width="2.200" opacity="0.450" transform="rotate(9)"/>
<path d="M-8.16 1.52 Q -14.37 -8.11 -16.50 -17.43" fill="none" stroke="#4a4a4a" stroke-width="2.400" opacity="0.550" transform="rotate(-5)" filter="url(#rb05)"/>
<path d="M-8.16 1.52 Q -14.37 -8.11 -17.19 -18.16" fill="none" stroke="#383838" stroke-width="0.900"/>
<path d="M-8.01 -2.17 Q -9.43 -13.54 -6.85 -21.43" fill="none" stroke="#f0f0f0" stroke-width="2.200" opacity="0.450" transform="rotate(9)"/>
<path d="M-8.01 -2.17 Q -9.43 -13.54 -7.30 -22.86" fill="none" stroke="#4a4a4a" stroke-width="2.400" opacity="0.550" transform="rotate(-5)" filter="url(#rb05)"/>
<path d="M-8.01 -2.17 Q -9.43 -13.54 -7.61 -23.81" fill="none" stroke="#383838" stroke-width="0.900"/>
<path d="M-6.28 -5.43 Q -2.62 -16.29 3.13 -22.28" fill="none" stroke="#f0f0f0" stroke-width="2.200" opacity="0.450" transform="rotate(9)"/>
<path d="M-6.28 -5.43 Q -2.62 -16.29 3.34 -23.77" fill="none" stroke="#4a4a4a" stroke-width="2.400" opacity="0.550" transform="rotate(-5)" filter="url(#rb05)"/>
<path d="M-6.28 -5.43 Q -2.62 -16.29 3.48 -24.76" fill="none" stroke="#383838" stroke-width="0.900"/>
<path d="M-3.30 -7.62 Q 4.71 -15.81 12.49 -18.72" fill="none" stroke="#f0f0f0" stroke-width="2.200" opacity="0.450" transform="rotate(9)"/>
<path d="M-3.30 -7.62 Q 4.71 -15.81 13.32 -19.96" fill="none" stroke="#4a4a4a" stroke-width="2.400" opacity="0.550" transform="rotate(-5)" filter="url(#rb05)"/>
<path d="M-3.30 -7.62 Q 4.71 -15.81 13.88 -20.80" fill="none" stroke="#383838" stroke-width="0.900"/>
<path d="M0.33 -8.29 Q 11.10 -12.21 19.37 -11.44" fill="none" stroke="#f0f0f0" stroke-width="2.200" opacity="0.450" transform="rotate(9)"/>
<path d="M0.33 -8.29 Q 11.10 -12.21 20.66 -12.21" fill="none" stroke="#4a4a4a" stroke-width="2.400" opacity="0.550" transform="rotate(-5)" filter="url(#rb05)"/>
<path d="M0.33 -8.29 Q 11.10 -12.21 21.52 -12.72" fill="none" stroke="#383838" stroke-width="0.900"/>
<circle cx="0" cy="0" r="8.500" fill="url(#rdisc)" stroke="#606060" stroke-width="0.500"/>
</g>
<g transform="translate(716.2 249.7) scale(-1 1)">
<circle cx="0" cy="1.500" r="23.500" fill="#101010" filter="url(#rb2)"/>
<g><circle cx="19.41" cy="2.73" r="5.600" fill="url(#rflw2)"/><circle cx="16.30" cy="10.88" r="5.600" fill="url(#rflw2)"/><circle cx="9.97" cy="16.88" r="5.600" fill="url(#rflw2)"/><circle cx="1.66" cy="19.53" r="5.600" fill="url(#rflw2)"/><circle cx="-6.98" cy="18.32" r="5.600" fill="url(#rflw2)"/><circle cx="-14.23" cy="13.47" r="5.600" fill="url(#rflw2)"/><circle cx="-18.67" cy="5.96" r="5.600" fill="url(#rflw2)"/><circle cx="-19.41" cy="-2.73" r="5.600" fill="url(#rflw2)"/><circle cx="-16.30" cy="-10.88" r="5.600" fill="url(#rflw2)"/><circle cx="-9.97" cy="-16.88" r="5.600" fill="url(#rflw2)"/><circle cx="-1.66" cy="-19.53" r="5.600" fill="url(#rflw2)"/><circle cx="6.98" cy="-18.32" r="5.600" fill="url(#rflw2)"/><circle cx="14.23" cy="-13.47" r="5.600" fill="url(#rflw2)"/><circle cx="18.67" cy="-5.96" r="5.600" fill="url(#rflw2)"/><circle cx="0" cy="0" r="20.500" fill="url(#rflw)"/></g>
<path d="M3.90 -7.33 Q 15.30 -6.18 22.42 -1.91" fill="none" stroke="#f0f0f0" stroke-width="2.200" opacity="0.450" transform="rotate(9)"/>
<path d="M3.90 -7.33 Q 15.30 -6.18 23.91 -2.03" fill="none" stroke="#4a4a4a" stroke-width="2.400" opacity="0.550" transform="rotate(-5)" filter="url(#rb05)"/>
<path d="M3.90 -7.33 Q 15.30 -6.18 24.91 -2.12" fill="none" stroke="#383838" stroke-width="0.900"/>
<path d="M6.69 -4.91 Q 16.47 1.07 21.03 8.01" fill="none" stroke="#f0f0f0" stroke-width="2.200" opacity="0.450" transform="rotate(9)"/>
<path d="M6.69 -4.91 Q 16.47 1.07 22.43 8.54" fill="none" stroke="#4a4a4a" stroke-width="2.400" opacity="0.550" transform="rotate(-5)" filter="url(#rb05)"/>
<path d="M6.69 -4.91 Q 16.47 1.07 23.36 8.90" fill="none" stroke="#383838" stroke-width="0.900"/>
<path d="M8.16 -1.52 Q 14.37 8.11 15.47 16.34" fill="none" stroke="#f0f0f0" stroke-width="2.200" opacity="0.450" transform="rotate(9)"/>
<path d="M8.16 -1.52 Q 14.37 8.11 16.50 17.43" fill="none" stroke="#4a4a4a" stroke-width="2.400" opacity="0.550" transform="rotate(-5)" filter="url(#rb05)"/>
<path d="M8.16 -1.52 Q 14.37 8.11 17.19 18.16" fill="none" stroke="#383838" stroke-width="0.900"/>
<path d="M8.01 2.17 Q 9.43 13.54 6.85 21.43" fill="none" stroke="#f0f0f0" stroke-width="2.200" opacity="0.450" transform="rotate(9)"/>
<path d="M8.01 2.17 Q 9.43 13.54 7.30 22.86" fill="none" stroke="#4a4a4a" stroke-width="2.400" opacity="0.550" transform="rotate(-5)" filter="url(#rb05)"/>
<path d="M8.01 2.17 Q 9.43 13.54 7.61 23.81" fill="none" stroke="#383838" stroke-width="0.900"/>
<path d="M6.28 5.43 Q 2.62 16.29 -3.13 22.28" fill="none" stroke="#f0f0f0" stroke-width="2.200" opacity="0.450" transform="rotate(9)"/>
<path d="M6.28 5.43 Q 2.62 16.29 -3.34 23.77" fill="none" stroke="#4a4a4a" stroke-width="2.400" opacity="0.550" transform="rotate(-5)" filter="url(#rb05)"/>
<path d="M6.28 5.43 Q 2.62 16.29 -3.48 24.76" fill="none" stroke="#383838" stroke-width="0.900"/>
<path d="M3.30 7.62 Q -4.71 15.81 -12.49 18.72" fill="none" stroke="#f0f0f0" stroke-width="2.200" opacity="0.450" transform="rotate(9)"/>
<path d="M3.30 7.62 Q -4.71 15.81 -13.32 19.96" fill="none" stroke="#4a4a4a" stroke-width="2.400" opacity="0.550" transform="rotate(-5)" filter="url(#rb05)"/>
<path d="M3.30 7.62 Q -4.71 15.81 -13.88 20.80" fill="none" stroke="#383838" stroke-width="0.900"/>
<path d="M-0.33 8.29 Q -11.10 12.21 -19.37 11.44" fill="none" stroke="#f0f0f0" stroke-width="2.200" opacity="0.450" transform="rotate(9)"/>
<path d="M-0.33 8.29 Q -11.10 12.21 -20.66 12.21" fill="none" stroke="#4a4a4a" stroke-width="2.400" opacity="0.550" transform="rotate(-5)" filter="url(#rb05)"/>
<path d="M-0.33 8.29 Q -11.10 12.21 -21.52 12.72" fill="none" stroke="#383838" stroke-width="0.900"/>
<path d="M-3.90 7.33 Q -15.30 6.18 -22.42 1.91" fill="none" stroke="#f0f0f0" stroke-width="2.200" opacity="0.450" transform="rotate(9)"/>
<path d="M-3.90 7.33 Q -15.30 6.18 -23.91 2.03" fill="none" stroke="#4a4a4a" stroke-width="2.400" opacity="0.550" transform="rotate(-5)" filter="url(#rb05)"/>
<path d="M-3.90 7.33 Q -15.30 6.18 -24.91 2.12" fill="none" stroke="#383838" stroke-width="0.900"/>
<path d="M-6.69 4.91 Q -16.47 -1.07 -21.03 -8.01" fill="none" stroke="#f0f0f0" stroke-width="2.200" opacity="0.450" transform="rotate(9)"/>
<path d="M-6.69 4.91 Q -16.47 -1.07 -22.43 -8.54" fill="none" stroke="#4a4a4a" stroke-width="2.400" opacity="0.550" transform="rotate(-5)" filter="url(#rb05)"/>
<path d="M-6.69 4.91 Q -16.47 -1.07 -23.36 -8.90" fill="none" stroke="#383838" stroke-width="0.900"/>
<path d="M-8.16 1.52 Q -14.37 -8.11 -15.47 -16.34" fill="none" stroke="#f0f0f0" stroke-width="2.200" opacity="0.450" transform="rotate(9)"/>
<path d="M-8.16 1.52 Q -14.37 -8.11 -16.50 -17.43" fill="none" stroke="#4a4a4a" stroke-width="2.400" opacity="0.550" transform="rotate(-5)" filter="url(#rb05)"/>
<path d="M-8.16 1.52 Q -14.37 -8.11 -17.19 -18.16" fill="none" stroke="#383838" stroke-width="0.900"/>
<path d="M-8.01 -2.17 Q -9.43 -13.54 -6.85 -21.43" fill="none" stroke="#f0f0f0" stroke-width="2.200" opacity="0.450" transform="rotate(9)"/>
<path d="M-8.01 -2.17 Q -9.43 -13.54 -7.30 -22.86" fill="none" stroke="#4a4a4a" stroke-width="2.400" opacity="0.550" transform="rotate(-5)" filter="url(#rb05)"/>
<path d="M-8.01 -2.17 Q -9.43 -13.54 -7.61 -23.81" fill="none" stroke="#383838" stroke-width="0.900"/>
<path d="M-6.28 -5.43 Q -2.62 -16.29 3.13 -22.28" fill="none" stroke="#f0f0f0" stroke-width="2.200" opacity="0.450" transform="rotate(9)"/>
<path d="M-6.28 -5.43 Q -2.62 -16.29 3.34 -23.77" fill="none" stroke="#4a4a4a" stroke-width="2.400" opacity="0.550" transform="rotate(-5)" filter="url(#rb05)"/>
<path d="M-6.28 -5.43 Q -2.62 -16.29 3.48 -24.76" fill="none" stroke="#383838" stroke-width="0.900"/>
<path d="M-3.30 -7.62 Q 4.71 -15.81 12.49 -18.72" fill="none" stroke="#f0f0f0" stroke-width="2.200" opacity="0.450" transform="rotate(9)"/>
<path d="M-3.30 -7.62 Q 4.71 -15.81 13.32 -19.96" fill="none" stroke="#4a4a4a" stroke-width="2.400" opacity="0.550" transform="rotate(-5)" filter="url(#rb05)"/>
<path d="M-3.30 -7.62 Q 4.71 -15.81 13.88 -20.80" fill="none" stroke="#383838" stroke-width="0.900"/>
<path d="M0.33 -8.29 Q 11.10 -12.21 19.37 -11.44" fill="none" stroke="#f0f0f0" stroke-width="2.200" opacity="0.450" transform="rotate(9)"/>
<path d="M0.33 -8.29 Q 11.10 -12.21 20.66 -12.21" fill="none" stroke="#4a4a4a" stroke-width="2.400" opacity="0.550" transform="rotate(-5)" filter="url(#rb05)"/>
<path d="M0.33 -8.29 Q 11.10 -12.21 21.52 -12.72" fill="none" stroke="#383838" stroke-width="0.900"/>
<circle cx="0" cy="0" r="8.500" fill="url(#rdisc)" stroke="#606060" stroke-width="0.500"/>
</g>
</g>
</svg>
<!--RELIEF-END-->
<div class="abs" style="left:1072px;top:112px;width:15px;height:556px;background:#cdcdcd"></div>
<svg class="abs" style="left:1071px;top:95px" width="17" height="17" viewBox="0 0 17 17"><path d="M4.500 11l4-4 4 4" stroke="#505050" stroke-width="2" fill="none"/></svg>
<svg class="abs" style="left:1071px;top:668px" width="17" height="17" viewBox="0 0 17 17"><path d="M4.500 7l4 4 4-4" stroke="#505050" stroke-width="2" fill="none"/></svg>
<div class="abs" style="left:298px;top:685px;width:773px;height:1px;background:#fafafa"></div>
<div class="abs" style="left:315px;top:686px;width:739px;height:15px;background:#cdcdcd"></div>
<svg class="abs" style="left:298px;top:685px" width="17" height="17" viewBox="0 0 17 17"><path d="M10.500 4.500l-4 4 4 4" stroke="#505050" stroke-width="2" fill="none"/></svg>
<svg class="abs" style="left:1054px;top:685px" width="17" height="17" viewBox="0 0 17 17"><path d="M6.500 4.500l4 4-4 4" stroke="#505050" stroke-width="2" fill="none"/></svg>
<div class="abs" style="left:278px;top:685px;width:20px;height:17px;background:#f0f0f0;border-left:1px solid #fff;border-top:1px solid #fff;border-right:1px solid #8a8a8a;border-bottom:2px solid #8a8a8a"></div>
<svg class="abs" style="left:278px;top:685px" width="20" height="17" viewBox="0 0 20 17"><path d="M6.500 4v3M6.500 9v3" stroke="#000" stroke-width="1"/><path d="M9 3.500v9l4.500-4.500z" fill="#000"/></svg>
<div class="abs" style="left:278px;top:706px;width:810px;height:1px;background:#a0a0a0"></div>
<div class="abs" style="left:278px;top:706px;width:1px;height:41px;background:#a0a0a0"></div>
<div class="abs" style="left:298px;top:723px;width:26px;height:21px;background:#000"></div>
<div class="abs" style="left:283px;top:711px;width:26px;height:21px;background:#fff;border:1px solid #000;box-shadow:1px 1px 0 #888"></div>
<svg class="abs" style="left:310px;top:711px" width="15" height="11" viewBox="0 0 15 11"><rect x="1.500" y="1.500" width="7" height="5" rx="2.500" fill="none" stroke="#000" stroke-width="1"/><rect x="5.500" y="4.500" width="7" height="5" rx="2.500" fill="none" stroke="#000" stroke-width="1"/></svg>
<div class="sw" style="left:333px;background:#ffffff"></div>
<div class="sw" style="left:368px;background:#000000"></div>
<div class="sw" style="left:403px;background:#00ffff"></div>
<div class="sw" style="left:438px;background:#3344dd"></div>
<div class="sw" style="left:473px;background:#5fbf55"></div>
<div class="sw" style="left:508px;background:#dd1122"></div>
<div class="sw" style="left:543px;background:#a030e0"></div>
<div class="sw" style="left:578px;background:#ffff80"></div>
<div class="sw" style="left:613px;background:#b0a038"></div>
<div class="sw" style="left:648px;background:#ffc818"></div>
<div class="sw" style="left:683px;background:#000000"></div>
<div class="sw" style="left:718px;background:#000000"></div>
<div class="sw" style="left:753px;background:#000000"></div>
<div class="sw" style="left:788px;background:#000000"></div>
<div class="sw" style="left:823px;background:#000000"></div>
<div class="sw" style="left:858px;background:#000000"></div>
<div class="sw" style="left:893px;background:#000000"></div>
<div class="sw" style="left:928px;background:#000000"></div>
<div class="sw" style="left:963px;background:#000000"></div>
<div class="sw" style="left:998px;background:#000000"></div>
<div class="sw" style="left:1033px;background:#000000"></div>
<svg class="abs" style="left:1071px;top:708px" width="17" height="38" viewBox="0 0 17 38"><path d="M4.500 10.500l4-4 4 4M4.500 28.500l4 4 4-4" stroke="#505050" stroke-width="2" fill="none"/></svg>
<!--CENTER-END-->
<!--RIGHT-->
<!-- right panel -->
<div class="abs" style="left:1096px;top:43px;width:270px;height:678px;background:#f0f0f0"></div>
<div class="abs" style="left:1096px;top:43px;width:270px;height:1px;background:#fcfcfc"></div>
<div class="abs rhdr" style="top:45px">Vectors<span class="rbtn up"></span></div>
<div class="abs combo" style="top:61px;height:22px">Default Sheet<span class="dd"></span></div>
<div class="abs lrow" style="top:112px"></div>
<div class="abs" style="left:1106px;top:116px;width:17px;height:18px;background:#e4e4e4;border-right:1px solid #bbb;border-bottom:1px solid #bbb"></div>
<div class="abs" style="left:1108px;top:119px;width:13px;height:13px;border-radius:50%;background:#000"></div>
<div class="abs" id="dl" style="left:1128px;top:119px;font-size:12px;line-height:14px;white-space:nowrap">Default Layer</div>
<div class="abs rhdr" style="top:172px">Bitmaps<span class="rbtn dn"></span></div>
<div class="abs rhdr" style="top:203px">Reliefs<span class="rbtn up"></span></div>
<div class="abs combo" style="top:219px;height:22px">Front Relief<span class="dd"></span></div>
<div class="abs lrow" style="top:270px;height:26px"></div>
<div class="abs" id="rl1" style="left:1149.500px;top:277px;font-size:12px;line-height:14px;white-space:nowrap">Relief Layer 1</div>
<!--RIGHTICONS-->
<svg class="abs" style="left:0;top:0" width="1366" height="330" viewBox="0 0 1366 330">
<defs><linearGradient id="rgdoc" x1="0" y1="0" x2="1" y2="1"><stop offset="0" stop-color="#c6d2e6"/><stop offset="1" stop-color="#5f7fae"/></linearGradient></defs>
<path d="M1115 104l3 2v-4z" fill="#b8b8b8" opacity="0.7"/><path d="M1103.5 90.5h6.500l1.500 9.500h5.500v5.500h-13.500z" fill="url(#rgdoc)"/><path d="M1104.5 91v14" stroke="#dfe8f6" stroke-width="1.200"/>
<path d="M1146 101l7-2 3 2-8 3z" fill="#b0b0b0" opacity="0.600"/><path d="M1140 94.5l2-3h5l1.500 1.500h5v4l-1 3h-12z" fill="#e8d628"/><path d="M1139 103c.5-2.500 1-5 1.800-6.500l13.500-.5c-.3 3-1.200 5.500-2 7z" fill="#f8ec46"/>
<path d="M1189.5 99l4-1.500-1 5-3 1z" fill="#b4b4b4" opacity="0.700"/><rect x="1176.5" y="92" width="13" height="12.500" rx="0.800" fill="#1b57b3"/><rect x="1179" y="92.5" width="8" height="5.500" fill="#eef0f4"/><rect x="1179.5" y="100" width="7" height="4.500" fill="#c9ccd2"/><rect x="1180.7" y="101" width="2" height="3" fill="#1b57b3"/>
<path d="M1223 102.5l5 1 1 3-5-1z" fill="#b0b0b0" opacity="0.600"/><path d="M1213 91.5h8l3 4v5l3 1v5h-12z" fill="#b89668"/><path d="M1213.5 92v13" stroke="#8a6c44" stroke-width="1.400" stroke-dasharray="1.200 1"/><path d="M1216 95.5h7l3 3.500v6h-10z" fill="#a88458"/>
<path d="M1251.5 90.5h8l3.500 3.500v12.500h-11.500z" fill="#8fa6c8"/><path d="M1259.5 90.5v3.500h3.500z" fill="#dfe6f2"/><circle cx="1257.5" cy="98" r="4" fill="#ffe23a"/><circle cx="1256.5" cy="96.8" r="1.8" fill="#fff8b0"/><path d="M1255.3 100.8h4.4l-.4 3.500h-3.6z" fill="#e8b820"/><rect x="1255.9" y="103.8" width="3.2" height="2.500" fill="#2a1a0a"/>
<path d="M1289 94.5h11l-1.500 10.500c-2 1.200-6 1.200-8 0z" fill="#3f86e0"/><ellipse cx="1294.5" cy="94.5" rx="5.500" ry="2" fill="#8fc0f4"/><path d="M1292 94.3h5" stroke="#e8f2ff" stroke-width="1.200"/><path d="M1291.5 96.5l1 8" stroke="#9fd0ff" stroke-width="1.500" opacity="0.600"/>
<rect x="1323.5" y="89.5" width="17" height="17" fill="#e6e6e6" stroke="#c8c8c8" stroke-width="0.800"/><circle cx="1329.5" cy="96.5" r="4.2" fill="#ffe23a"/><circle cx="1328.5" cy="95.3" r="1.89" fill="#fff8b0"/><path d="M1327.19 99.44h4.62l-.4 3.500h-3.82z" fill="#e8b820"/><rect x="1327.82" y="102.44" width="3.36" height="2.500" fill="#2a1a0a"/><circle cx="1335.5" cy="95" r="4.2" fill="#ffe23a"/><circle cx="1334.5" cy="93.8" r="1.89" fill="#fff8b0"/><path d="M1333.19 97.94h4.62l-.4 3.500h-3.82z" fill="#e8b820"/><rect x="1333.82" y="100.94" width="3.36" height="2.500" fill="#2a1a0a"/>
<rect x="1287.500" y="116.500" width="16" height="16" fill="#c2c2c2" stroke="#eee" stroke-width="0.800"/>
<path d="M1292 123c0-4 6-4 6 0v2h-6z" fill="none" stroke="#e8e8e8" stroke-width="1.500"/><rect x="1290.500" y="124.500" width="9.500" height="7.500" fill="#9a9a9a"/><path d="M1295.300 131v-4.500M1293.500 128.300l1.800-2 1.800 2" stroke="#000" stroke-width="1.200" fill="none"/>
<rect x="1305.500" y="116.500" width="16.500" height="16" fill="#d0d0d0"/><path d="M1308 117v15.500M1305.500 130h16" stroke="#000" stroke-width="1" stroke-dasharray="1.500 1"/><path d="M1320 118l-7 7" stroke="#000" stroke-width="2.200"/><path d="M1310.500 127.500l1-6 5 5z" fill="#000"/>
<rect x="1323.5" y="116.5" width="17" height="17" fill="#e2e2e2" stroke="#bdbdbd" stroke-width="0.800"/><circle cx="1332" cy="123" r="4.6" fill="#ffe23a"/><circle cx="1331" cy="121.8" r="2.07" fill="#fff8b0"/><path d="M1329.47 126.22h5.06l-.4 3.500h-4.26z" fill="#e8b820"/><rect x="1330.16" y="129.22" width="3.68" height="2.500" fill="#2a1a0a"/>
<rect x="1312" y="141" width="12" height="12" rx="1" fill="#1c4fb0"/><rect x="1330" y="141" width="12" height="12" rx="1" fill="#1c4fb0"/><path d="M1318 151.5v-7M1314.800 147.5l3.200-3.200 3.200 3.200" stroke="#fff" stroke-width="1.700" fill="none"/><path d="M1336 142.5v7M1332.800 146.5l3.200 3.200 3.200-3.200" stroke="#fff" stroke-width="1.700" fill="none"/><path d="M1312 152.5h12M1330 152.5h12" stroke="#0c2a70" stroke-width="1"/>
<path d="M1115 262.5l3 2v-4z" fill="#b8b8b8" opacity="0.7"/><path d="M1103.5 249h6.500l1.500 9.500h5.500v5.500h-13.500z" fill="url(#rgdoc)"/><path d="M1104.5 249.5v14" stroke="#dfe8f6" stroke-width="1.200"/>
<path d="M1137 259l7-2 3 2-8 3z" fill="#b0b0b0" opacity="0.600"/><path d="M1131 252.5l2-3h5l1.500 1.500h5v4l-1 3h-12z" fill="#e8d628"/><path d="M1130 261c.5-2.500 1-5 1.800-6.500l13.500-.5c-.3 3-1.200 5.500-2 7z" fill="#f8ec46"/>
<path d="M1171 257l4-1.500-1 5-3 1z" fill="#b4b4b4" opacity="0.700"/><rect x="1158" y="250" width="13" height="12.500" rx="0.800" fill="#1b57b3"/><rect x="1160.5" y="250.5" width="8" height="5.500" fill="#eef0f4"/><rect x="1161" y="258" width="7" height="4.500" fill="#c9ccd2"/><rect x="1162.2" y="259" width="2" height="3" fill="#1b57b3"/>
<path d="M1196 260.5l5 1 1 3-5-1z" fill="#b0b0b0" opacity="0.600"/><path d="M1186 249.5h8l3 4v5l3 1v5h-12z" fill="#b89668"/><path d="M1186.5 250v13" stroke="#8a6c44" stroke-width="1.400" stroke-dasharray="1.200 1"/><path d="M1189 253.5h7l3 3.500v6h-10z" fill="#a88458"/>
<path d="M1213 255l8-5 9 4-8 5z" fill="#8a8ee8" stroke="#5a5eb8" stroke-width="0.600"/><path d="M1213 260l8-4 9 4-8 5z" fill="#b81414"/><path d="M1220 257h3v3h2l-3.500 3-3.500-3h2z" fill="#f4d020"/>
<path d="M1242.5 248.5h8l3.500 3.500v12.500h-11.500z" fill="#8fa6c8"/><path d="M1250.5 248.5v3.500h3.500z" fill="#dfe6f2"/><circle cx="1248.5" cy="256" r="4" fill="#ffe23a"/><circle cx="1247.5" cy="254.8" r="1.8" fill="#fff8b0"/><path d="M1246.3 258.8h4.4l-.4 3.500h-3.6z" fill="#e8b820"/><rect x="1246.9" y="261.8" width="3.2" height="2.500" fill="#2a1a0a"/>
<rect x="1269.500" y="249.500" width="14.500" height="14.500" fill="#050505"/><g fill="#c4c4c4"><circle cx="1273.500" cy="252" r="1.300"/><circle cx="1279.500" cy="252" r="1.300"/><ellipse cx="1276.500" cy="254" rx="2.800" ry="2.300"/><ellipse cx="1276.500" cy="259.500" rx="4" ry="4"/><ellipse cx="1272" cy="257" rx="1.200" ry="2"/><ellipse cx="1281" cy="257" rx="1.200" ry="2"/></g><circle cx="1276.500" cy="260" r="2" fill="#888"/><path d="M1281 251h2.500M1282.200 251v3" stroke="#eee" stroke-width="0.900"/>
<path d="M1298.5 252.5h11l-1.500 10.500c-2 1.200-6 1.200-8 0z" fill="#3f86e0"/><ellipse cx="1304" cy="252.5" rx="5.500" ry="2" fill="#8fc0f4"/><path d="M1301.5 252.3h5" stroke="#e8f2ff" stroke-width="1.200"/><path d="M1301 254.5l1 8" stroke="#9fd0ff" stroke-width="1.500" opacity="0.600"/>
<rect x="1323.5" y="247.5" width="17" height="17" fill="#e6e6e6" stroke="#c8c8c8" stroke-width="0.800"/><circle cx="1329.5" cy="254.5" r="4.2" fill="#ffe23a"/><circle cx="1328.5" cy="253.3" r="1.89" fill="#fff8b0"/><path d="M1327.19 257.44h4.62l-.4 3.500h-3.82z" fill="#e8b820"/><rect x="1327.82" y="260.44" width="3.36" height="2.500" fill="#2a1a0a"/><circle cx="1335.5" cy="253" r="4.2" fill="#ffe23a"/><circle cx="1334.5" cy="251.8" r="1.89" fill="#fff8b0"/><path d="M1333.19 255.94h4.62l-.4 3.500h-3.82z" fill="#e8b820"/><rect x="1333.82" y="258.94" width="3.36" height="2.500" fill="#2a1a0a"/>
<path d="M1113 287c0-8 5-13 11-13 5 0 8 4 8 9l-4 3c0-4-2-6-5-6-4 0-6 3-6 8z" fill="#d8bc68"/><path d="M1117 288c0-5 2-8 6-8 3 0 5 2 5 6l-5 3z" fill="#8a90d8"/><path d="M1113 287c0-8 5-13 11-13 5 0 8 4 8 9" fill="none" stroke="#f0e0a0" stroke-width="1"/><path d="M1111.500 290h7M1115 286.500v7" stroke="#000" stroke-width="1.200"/>
<path d="M1139.300 280v7l4-3.500z" fill="#000"/>
<rect x="1323.5" y="274" width="17" height="17" fill="#e2e2e2" stroke="#bdbdbd" stroke-width="0.800"/><circle cx="1332" cy="280.5" r="4.6" fill="#ffe23a"/><circle cx="1331" cy="279.3" r="2.07" fill="#fff8b0"/><path d="M1329.47 283.72h5.06l-.4 3.500h-4.26z" fill="#e8b820"/><rect x="1330.16" y="286.72" width="3.68" height="2.500" fill="#2a1a0a"/>
<rect x="1312" y="299" width="12" height="12" rx="1" fill="#1c4fb0"/><rect x="1330" y="299" width="12" height="12" rx="1" fill="#1c4fb0"/><path d="M1318 309.5v-7M1314.800 305.5l3.200-3.200 3.200 3.200" stroke="#fff" stroke-width="1.700" fill="none"/><path d="M1336 300.5v7M1332.800 304.5l3.200 3.200 3.200-3.200" stroke="#fff" stroke-width="1.700" fill="none"/><path d="M1312 310.5h12M1330 310.5h12" stroke="#0c2a70" stroke-width="1"/>
</svg>
<!--RIGHTICONS-END-->
<div class="abs" style="left:1096px;top:720px;width:270px;height:1px;background:#a0a0a0"></div>
<div class="abs" style="left:1096px;top:721px;width:270px;height:26px;background:#d0d0d0" id="rtabbg"></div>
<svg class="abs" style="left:1192px;top:721px" width="174" height="26"><filter id="nz2" x="0" y="0" width="100%" height="100%"><feTurbulence type="fractalNoise" baseFrequency="0.350" numOctaves="2" seed="5"/><feColorMatrix values="0 0 0 0 1  0 0 0 0 1  0 0 0 0 1  1.200 0 0 0 -0.480"/></filter><rect width="176" height="26" filter="url(#nz2)" opacity="0.700"/></svg>
<div class="abs" style="left:1096px;top:721px;width:47px;height:26px;background:#f0f0f0;border-radius:0 0 5px 5px"></div>
<div class="abs" style="left:1142px;top:721px;width:50px;height:25px;background:#f6f6f6;border:1px solid #b0b0b0;border-top:none;border-radius:0 0 5px 5px"></div>
<div class="abs" id="tb3" style="left:1103.300px;top:726px;font-size:11.800px;letter-spacing:-0.490px">Layers</div>
<div class="abs" id="tb4" style="left:1151.300px;top:726px;font-size:11.800px;letter-spacing:-0.020px">Add In</div>
<div class="abs" style="left:1094px;top:747px;width:272px;height:1px;background:#a0a0a0"></div>
<!--RIGHT-END-->
<!--STATUS-->
<div class="abs" style="left:0;top:748px;width:1366px;height:20px;background:#f0f0f0"></div>
<div class="abs" style="left:1023px;top:751px;width:66px;height:18px;border-left:1px solid #a8a8a8;border-top:1px solid #a8a8a8;border-right:1px solid #fff;font-size:11.500px;line-height:14px;padding:2px 0 0 2px;white-space:nowrap;letter-spacing:-0.400px">X: 1339.338</div>
<div class="abs" style="left:1092px;top:751px;width:66px;height:18px;border-left:1px solid #a8a8a8;border-top:1px solid #a8a8a8;border-right:1px solid #fff;font-size:11.500px;line-height:14px;padding:2px 0 0 2px;white-space:nowrap;letter-spacing:-0.400px">Y: -379.383</div>
<div class="abs" style="left:1161px;top:751px;width:60px;height:18px;border-left:1px solid #a8a8a8;border-top:1px solid #a8a8a8;border-right:1px solid #fff;font-size:11.500px;line-height:14px;padding:2px 0 0 2px;white-space:nowrap;letter-spacing:-0.400px"></div>
<div class="abs" style="left:1224px;top:751px;width:70px;height:18px;border-left:1px solid #a8a8a8;border-top:1px solid #a8a8a8;border-right:1px solid #fff;font-size:11.500px;line-height:14px;padding:2px 0 0 2px;white-space:nowrap;letter-spacing:-0.400px"></div>
<div class="abs" style="left:1297px;top:751px;width:70px;height:18px;border-left:1px solid #a8a8a8;border-top:1px solid #a8a8a8;border-right:1px solid #fff;font-size:11.500px;line-height:14px;padding:2px 0 0 2px;white-space:nowrap;letter-spacing:-0.400px"></div>
<!--STATUS-END-->
</div>
</body>
</html>
